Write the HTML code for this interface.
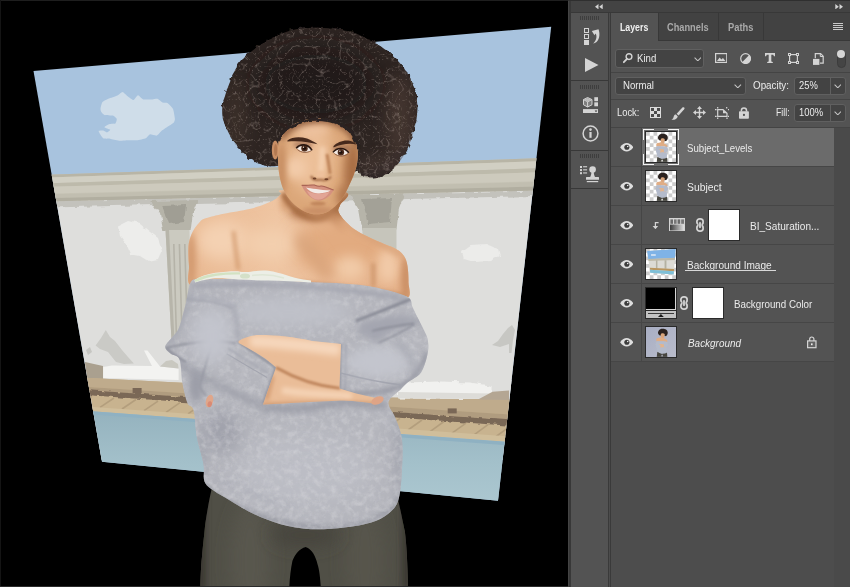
<!DOCTYPE html>
<html><head><meta charset="utf-8"><title>Layers</title><style>
html,body{margin:0;padding:0;}
body{width:850px;height:587px;overflow:hidden;background:#535353;position:relative;font-family:"Liberation Sans",sans-serif;}
.b{position:absolute;display:block;}
.t{position:absolute;white-space:nowrap;transform-origin:0 50%;}
</style></head>
<body>
<div class="b" style="left:0;top:0;width:568px;height:587px;background:#000;overflow:hidden">
<svg class="b" style="left:0;top:0" width="568" height="587" viewBox="0 0 568 587">
<defs>
<clipPath id="q"><polygon points="33.5,71.0 551.2,26.8 498.0,500.8 102.0,461.8"/></clipPath>
<filter id="hairf" x="-10%" y="-10%" width="120%" height="120%">
  <feTurbulence type="fractalNoise" baseFrequency="0.16" numOctaves="2" seed="3" result="n"/>
  <feDisplacementMap in="SourceGraphic" in2="n" scale="7" xChannelSelector="R" yChannelSelector="G"/>
</filter>
<filter id="curl" x="0" y="0" width="100%" height="100%">
  <feTurbulence type="turbulence" baseFrequency="0.085" numOctaves="2" seed="8" result="t"/>
  <feColorMatrix in="t" type="matrix" values="0 0 0 0 0.46  0 0 0 0 0.38  0 0 0 0 0.34  -7 0 0 0 0.95" result="c"/>
  <feComposite in="c" in2="SourceGraphic" operator="in"/>
</filter>
<filter id="curl2" x="0" y="0" width="100%" height="100%">
  <feTurbulence type="turbulence" baseFrequency="0.15" numOctaves="2" seed="31" result="t"/>
  <feColorMatrix in="t" type="matrix" values="0 0 0 0 0.40  0 0 0 0 0.32  0 0 0 0 0.28  -8 0 0 0 0.9" result="c"/>
  <feComposite in="c" in2="SourceGraphic" operator="in"/>
</filter>
<filter id="knit" x="0" y="0" width="100%" height="100%">
  <feTurbulence type="fractalNoise" baseFrequency="0.16" numOctaves="3" seed="5" result="t"/>
  <feColorMatrix in="t" type="matrix" values="0 0 0 0 0.80  0 0 0 0 0.80  0 0 0 0 0.82  1.6 0 0 0 -0.72" result="c"/>
  <feComposite in="c" in2="SourceGraphic" operator="in"/>
</filter>
<filter id="knit2" x="0" y="0" width="100%" height="100%">
  <feTurbulence type="fractalNoise" baseFrequency="0.13" numOctaves="3" seed="21" result="t"/>
  <feColorMatrix in="t" type="matrix" values="0 0 0 0 0.64  0 0 0 0 0.64  0 0 0 0 0.68  0 1.6 0 0 -0.74" result="c"/>
  <feComposite in="c" in2="SourceGraphic" operator="in"/>
</filter>
<filter id="rough" x="-5%" y="-5%" width="110%" height="110%">
  <feTurbulence type="fractalNoise" baseFrequency="0.12" numOctaves="2" seed="11" result="n"/>
  <feDisplacementMap in="SourceGraphic" in2="n" scale="5" xChannelSelector="R" yChannelSelector="G"/>
</filter>
<filter id="b1" filterUnits="userSpaceOnUse" x="0" y="0" width="568" height="587"><feGaussianBlur stdDeviation="1"/></filter>
<filter id="b2" filterUnits="userSpaceOnUse" x="0" y="0" width="568" height="587"><feGaussianBlur stdDeviation="2"/></filter>
<filter id="b3" filterUnits="userSpaceOnUse" x="0" y="0" width="568" height="587"><feGaussianBlur stdDeviation="3"/></filter>
<filter id="b4" filterUnits="userSpaceOnUse" x="0" y="0" width="568" height="587"><feGaussianBlur stdDeviation="4"/></filter>
<filter id="b6" filterUnits="userSpaceOnUse" x="0" y="0" width="568" height="587"><feGaussianBlur stdDeviation="6"/></filter>
<filter id="b8" filterUnits="userSpaceOnUse" x="0" y="0" width="568" height="587"><feGaussianBlur stdDeviation="8"/></filter>
<filter id="b12" filterUnits="userSpaceOnUse" x="0" y="0" width="568" height="587"><feGaussianBlur stdDeviation="12"/></filter>
<linearGradient id="pool" x1="0" y1="0" x2="0" y2="1"><stop offset="0" stop-color="#93b1bd"/><stop offset="0.5" stop-color="#a3c0ca"/><stop offset="1" stop-color="#afcad3"/></linearGradient>
<linearGradient id="corn" x1="0" y1="0" x2="0" y2="1"><stop offset="0" stop-color="#c9c6b6"/><stop offset="0.35" stop-color="#d6d3c6"/><stop offset="0.7" stop-color="#c4c1b1"/><stop offset="1" stop-color="#aaa79a"/></linearGradient>
<linearGradient id="sk" x1="0" y1="0" x2="1" y2="0"><stop offset="0" stop-color="#e9b992"/><stop offset="0.4" stop-color="#efc5a2"/><stop offset="1" stop-color="#e3ae86"/></linearGradient>
<clipPath id="poolc"><polygon points="30,406.8 545,444.6 545,520 30,520"/></clipPath>
<clipPath id="cSw"><path d="M190.8,282.0 C193.4,277.9 193.9,280.0 201.0,279.5 C208.1,279.0 222.8,279.0 233.5,279.0 C244.2,279.0 252.6,279.1 265.3,279.6 C278.0,280.1 296.6,281.4 309.8,282.1 C323.0,282.8 334.1,282.9 344.7,283.7 C355.3,284.5 363.0,284.8 373.3,286.9 C383.6,289.0 400.2,293.0 406.7,296.4 C413.2,299.8 410.7,303.4 412.5,307.0 C414.3,310.6 415.4,313.2 417.7,317.8 C420.0,322.4 424.4,330.4 426.2,334.8 C428.0,339.2 428.0,341.1 428.3,344.0 C428.6,346.9 428.4,349.0 427.9,352.0 C427.4,355.0 426.6,358.6 425.5,362.0 C424.4,365.4 422.9,369.7 421.1,372.4 C419.3,375.1 416.8,376.3 414.5,378.0 C412.2,379.7 409.8,380.7 407.5,382.6 C405.2,384.5 403.6,386.7 400.7,389.4 C397.8,392.1 391.9,396.2 390.0,399.0 C388.1,401.8 388.2,403.0 389.0,406.0 C389.8,409.0 392.6,411.1 394.8,416.8 C397.0,422.5 400.9,430.5 402.0,440.0 C403.1,449.5 402.3,463.9 401.7,474.0 C401.1,484.1 400.4,494.0 398.1,500.7 C395.8,507.4 392.5,510.4 388.0,514.0 C383.5,517.6 378.6,520.2 371.3,522.5 C364.0,524.8 354.5,526.4 344.4,527.5 C334.3,528.6 321.5,529.8 310.9,529.2 C300.3,528.7 290.2,526.7 280.7,524.2 C271.2,521.7 262.3,517.9 253.9,514.0 C245.5,510.1 237.1,504.6 230.4,500.7 C223.7,496.8 217.9,493.8 213.6,490.6 C209.3,487.4 206.2,485.9 204.5,481.5 C202.8,477.1 204.8,471.4 203.5,464.0 C202.2,456.6 198.5,446.0 196.8,437.0 C195.1,428.0 195.1,415.7 193.5,410.0 C191.9,404.3 189.3,407.6 187.4,403.0 C185.5,398.4 183.6,389.9 182.3,382.6 C181.0,375.4 181.5,364.3 179.5,359.5 C177.5,354.7 172.8,355.7 170.4,353.6 C168.0,351.5 165.0,349.4 165.2,346.8 C165.4,344.2 169.2,341.1 171.5,338.0 C173.8,334.9 176.5,333.7 178.9,328.0 C181.3,322.3 183.7,311.7 185.7,304.0 C187.7,296.3 188.2,286.1 190.8,282.0Z"/></clipPath>
<clipPath id="cTo"><path d="M284.0,190.0 C294.7,189.7 335.7,189.5 345.0,192.0 C354.3,194.5 341.1,201.7 340.0,205.0 C338.9,208.3 337.5,209.2 338.5,212.0 C339.5,214.8 342.8,218.8 346.0,222.0 C349.2,225.2 352.4,228.2 357.5,231.3 C362.6,234.4 370.2,237.9 376.5,240.8 C382.8,243.7 390.9,246.3 395.5,248.8 C400.1,251.3 402.0,253.1 404.0,256.0 C406.0,258.9 406.8,261.7 407.5,266.0 C408.2,270.3 408.6,276.7 408.5,282.0 C408.4,287.3 412.6,296.7 406.7,298.0 C400.8,299.3 389.1,292.0 373.0,290.0 C356.9,288.0 333.3,287.3 310.0,286.0 C286.7,284.7 252.7,282.0 233.0,282.0 C213.3,282.0 199.3,288.7 192.0,286.0 C184.7,283.3 189.6,272.5 189.0,266.0 C188.4,259.5 188.2,251.8 188.4,247.0 C188.7,242.2 189.6,239.9 190.5,237.0 C191.4,234.1 192.4,232.0 193.8,229.7 C195.2,227.4 197.1,224.8 199.0,223.0 C200.9,221.2 200.8,220.1 205.0,218.6 C209.2,217.1 216.6,215.4 224.0,213.8 C231.4,212.2 242.6,210.6 249.4,209.0 C256.2,207.4 260.8,205.6 265.0,204.0 C269.2,202.4 272.1,201.2 274.8,199.5 C277.5,197.8 279.5,195.6 281.0,194.0 C282.5,192.4 273.3,190.3 284.0,190.0Z"/></clipPath>
<clipPath id="cHa"><path d="M309.0,28.0 C315.7,27.6 321.7,27.8 329.0,28.5 C336.3,29.2 345.7,30.2 353.0,32.5 C360.3,34.8 367.2,38.8 373.0,42.0 C378.8,45.2 383.0,47.8 388.0,52.0 C393.0,56.2 398.9,61.7 403.0,67.0 C407.1,72.3 410.2,78.2 412.5,84.0 C414.8,89.8 416.3,95.7 417.0,101.5 C417.7,107.3 417.2,113.2 416.5,119.0 C415.8,124.8 414.4,130.2 412.5,136.0 C410.6,141.8 407.8,148.5 405.0,153.5 C402.2,158.5 399.3,162.4 396.0,166.0 C392.7,169.6 388.8,172.9 385.0,175.0 C381.2,177.1 376.8,178.3 373.0,178.5 C369.2,178.7 365.0,177.8 362.0,176.0 C359.0,174.2 357.0,168.7 355.0,168.0 C353.0,167.3 361.5,172.3 350.0,172.0 C338.5,171.7 297.7,167.0 286.0,166.0 C274.3,165.0 283.0,166.0 280.0,166.0 C277.0,166.0 271.8,166.5 268.0,166.0 C264.2,165.5 260.5,164.7 257.0,163.0 C253.5,161.3 250.7,159.2 247.0,156.0 C243.3,152.8 238.2,147.7 235.0,143.5 C231.8,139.3 229.6,135.6 227.5,131.0 C225.4,126.4 223.2,120.9 222.5,116.0 C221.8,111.1 222.2,107.2 223.5,101.5 C224.8,95.8 227.5,88.2 230.0,82.0 C232.5,75.8 234.8,69.7 238.5,64.5 C242.2,59.3 246.9,55.1 252.0,51.0 C257.1,46.9 262.8,43.3 269.0,40.0 C275.2,36.7 282.3,33.0 289.0,31.0 C295.7,29.0 302.3,28.4 309.0,28.0Z"/></clipPath>
<clipPath id="cPa"><path d="M211.9,488 C240,503 280,518 311,522 C345,523 380,514 398.1,500 C401,512 404,528 404.8,531 C406.5,545 407.5,560 408.2,592 L321,592 C320.5,580 319.5,570 317.6,564.4 C315.5,556 312,549 305.9,547 C300,548 295,554 292.4,561 C290.5,570 289.5,580 289.1,592 L200.2,592 C200.5,575 201.5,560 201.9,557.7 C203,545 204.5,532 205.2,524.2 C207,512 209.5,498 211.9,488Z"/></clipPath>
<clipPath id="cAr"><path d="M238.6,341.0 C237.3,338.6 243.9,338.5 247.0,337.5 C250.1,336.5 250.7,335.2 257.0,335.0 C263.3,334.8 275.8,335.0 285.0,336.0 C294.2,337.0 302.7,339.8 312.0,341.0 C321.3,342.2 336.2,335.7 341.0,343.5 C345.8,351.3 337.8,379.6 341.0,388.0 C344.2,396.4 354.5,392.4 360.0,394.0 C365.5,395.6 370.5,396.4 374.0,397.5 C377.5,398.6 380.7,399.4 381.0,400.5 C381.3,401.6 379.5,403.9 376.0,404.0 C372.5,404.1 369.5,401.3 360.0,401.0 C350.5,400.7 335.3,401.4 319.0,402.0 C302.7,402.6 270.5,407.2 262.0,404.5 C253.5,401.8 265.7,392.2 268.0,386.0 C270.3,379.8 278.2,373.2 276.0,367.5 C273.8,361.8 261.2,356.4 255.0,352.0 C248.8,347.6 239.9,343.4 238.6,341.0Z"/></clipPath>
<clipPath id="cFa"><path d="M278.5,141.0 C279.1,136.6 279.4,137.1 281.6,134.5 C283.8,131.9 287.4,127.8 291.8,125.3 C296.2,122.8 302.6,120.2 308.0,119.2 C313.4,118.2 319.0,118.0 324.5,119.2 C330.0,120.4 336.2,123.5 341.0,126.4 C345.8,129.3 350.2,132.5 353.0,136.6 C355.8,140.7 357.3,145.8 357.8,150.9 C358.3,156.0 357.5,161.8 356.2,167.2 C354.9,172.6 352.5,178.1 350.0,183.6 C347.5,189.1 344.6,195.4 341.0,200.0 C337.4,204.6 332.7,208.8 328.6,211.2 C324.5,213.6 320.4,214.3 316.3,214.3 C312.2,214.3 308.1,213.2 304.0,211.2 C299.9,209.1 295.2,205.6 291.8,202.0 C288.4,198.4 285.7,194.1 283.6,189.7 C281.6,185.3 280.4,180.2 279.5,175.4 C278.6,170.6 278.2,166.7 278.0,161.0 C277.8,155.3 277.9,145.4 278.5,141.0Z"/></clipPath>
</defs>
<rect width="568" height="587" fill="#000"/>
<g clip-path="url(#q)">
<rect x="0" y="0" width="568" height="587" fill="#a8c3de"/>
<path d="M100.5,108.5 C100.6,107.5 101.7,103.0 102.5,102.0 C103.3,101.0 106.8,99.5 108.3,98.8 C109.8,98.1 116.0,96.2 117.4,95.5 C118.8,94.8 121.5,91.8 122.5,91.9 C123.5,92.0 126.6,95.4 127.7,96.2 C128.8,97.0 132.5,100.1 133.5,100.0 C134.5,99.9 137.0,95.4 138.0,95.3 C139.0,95.2 141.8,99.0 143.2,99.4 C144.6,99.8 150.9,99.5 152.3,99.4 C153.7,99.3 156.5,98.5 157.5,98.8 C158.5,99.1 161.6,102.1 162.6,102.6 C163.6,103.0 166.8,102.6 167.8,103.3 C168.8,104.0 172.3,107.5 173.0,109.1 C173.7,110.6 174.8,117.4 174.9,118.8 C175.0,120.2 174.3,121.9 173.6,122.7 C172.9,123.5 169.0,125.8 167.8,126.6 C166.6,127.4 162.5,130.2 161.4,131.1 C160.3,132.0 158.0,135.3 156.8,135.6 C155.6,135.9 150.8,134.1 149.7,134.4 C148.6,134.7 147.1,137.6 145.8,138.2 C144.5,138.8 138.7,140.0 136.8,140.2 C134.9,140.4 128.1,140.1 126.4,140.2 C124.7,140.3 121.5,140.9 120.0,140.8 C118.5,140.7 112.6,139.2 110.9,138.9 C109.2,138.6 104.3,139.0 103.1,138.2 C101.9,137.4 98.6,131.9 98.6,131.1 C98.6,130.3 102.3,130.4 103.1,130.5 C103.9,130.6 106.3,132.5 107.0,132.4 C107.7,132.3 110.5,130.3 110.2,129.8 C109.9,129.3 104.5,127.8 104.4,127.2 C104.3,126.6 108.5,124.4 109.6,124.0 C110.7,123.6 114.7,123.9 115.4,123.4 C116.1,122.9 117.0,119.6 116.7,118.8 C116.4,118.0 114.0,116.0 112.8,115.6 C111.6,115.2 105.6,115.3 104.4,114.9 C103.2,114.5 101.6,112.3 101.2,111.7 C100.8,111.1 100.4,109.5 100.5,108.5Z" fill="#cfdde9"/>
<polygon points="30,185 545,175 545,460 30,460" fill="#dededc"/>
<polygon points="30.0,201.8 545.0,190.3 545.0,195.8 30.0,207.9" fill="#c3c2bc" filter="url(#rough)"/>
<path d="M118,226 L128,221 L140,224 L150,232 L158,238 L162,250 L158,259 L148,261 L140,256 L130,254 L126,244 L120,236Z" fill="#ededeb" filter="url(#rough)"/>
<path d="M462,252 L472,245 L486,244 L498,249 L500,256 L490,261 L474,262 L464,259Z" fill="#ececea" filter="url(#rough)"/>
<polygon points="150.5,201 198,200 193,212 190.6,231 163.5,231 160,214" fill="#b6b4a9" filter="url(#rough)"/>
<polygon points="162,206 186,205 184,222 168,224" fill="#a09e94" filter="url(#rough)"/>
<polygon points="165.5,230 189.5,230 192,350 172,350" fill="#cbcac0"/>
<polygon points="165.5,230 169,230 175,350 172,350" fill="#b7b5aa"/>
<polygon points="173,244 174.6,244 177.6,350 176,350" fill="#b5b3a8"/>
<polygon points="178.6,244 180.2,244 183.2,350 181.6,350" fill="#b5b3a8"/>
<polygon points="184,244 185.6,244 188.6,350 187,350" fill="#b5b3a8"/>
<polygon points="349.5,194.5 404.7,193.5 399,208 396.5,229.5 362.4,229.5 359,210" fill="#b6b4a9" filter="url(#rough)"/>
<polygon points="362,199 392,198 390,222 368,224" fill="#a3a197" filter="url(#rough)"/>
<polygon points="362.4,228 396.5,228 396.5,300 362.4,300" fill="#c6c5bb"/>
<polygon points="30.0,175.4 545.0,158.1 545.0,190.3 30.0,201.8" fill="#c6c3b5" />
<polygon points="30.0,175.4 545.0,158.1 545.0,161.1 30.0,178.0" fill="#b8b5a6" />
<polygon points="30.0,178.0 545.0,161.1 545.0,168.1 30.0,183.8" fill="#d1cfc3" />
<polygon points="30.0,183.8 545.0,168.1 545.0,172.1 30.0,187.3" fill="#bdbaab" />
<polygon points="30.0,187.3 545.0,172.1 545.0,181.1 30.0,194.2" fill="#cdcabd" />
<polygon points="30.0,194.9 545.0,181.8 545.0,186.3 30.0,198.5" fill="#c1beb0" />
<polygon points="30.0,198.5 545.0,186.3 545.0,190.3 30.0,201.8" fill="#b1aea0" />
<path d="M95.6,345.6 L101,338 L105.8,330 L110,337 L115,341 L122,350 L128,357 L133.9,363.5 L124,364 L116,362 L108,352 L100,349Z" fill="#cacac6"/>
<path d="M86,350 L90,347 L92,352 L88,355Z" fill="#c6c6c2"/>
<polygon points="85,362 103,366 103,380 86,379" fill="#aaa08f"/>
<path d="M144,350.5 L147.5,350.5 L160,366.5 L178.6,368.5 L178.6,380 L103.2,378 L103.2,367 L112,365.5 L152,366Z" fill="#f3f3f1"/>
<path d="M160,366.5 L166,361 L172,360 L178,364 L178.6,368.5Z" fill="#c9c8c0"/>
<path d="M492,345 L498,341 L503,334 L508,328 L512,325 L515,330 L513,340 L511.5,353 L509,353 L509,344 L500,347Z" fill="#c7c7c3"/>
<polygon points="30.0,375.0 545.0,401.3 545.0,444.6 30.0,406.8" fill="#c8b38f" />
<polygon points="30.0,375.0 545.0,401.3 545.0,416.7 30.0,383.1" fill="#bfab8c" />
<polygon points="180,380 385,397.5 545,400 545,380" fill="#dededc"/>
<polygon points="180,384 385,397.5 545,400 545,404 385,404 180,390" fill="#bfab8c"/>
<polygon points="30.0,383.1 545.0,416.7 545.0,422.8 30.0,386.0" fill="#b09c7f" />
<polygon points="30.0,386.0 545.0,422.8 545.0,428.3 30.0,390.9" fill="#7a6756" filter="url(#rough)"/>
<rect x="132.6" y="388" width="9" height="5" fill="#7a6756"/>
<rect x="447.7" y="408.4" width="9" height="5" fill="#7a6756"/>
<path d="M398,386 L404,382.6 L440,381.6 L470,382.6 L492.5,386 L492.5,399 L398,398.5Z" fill="#f1f1ef" filter="url(#rough)"/>
<path d="M398,392 L492.5,393.5 L492.5,399 L398,398.5Z" fill="#dddcd8"/>
<path d="M492.5,391.8 L509,390.5 L509,400 L478,399.5Z" fill="#b4a693"/>
<path d="M70,394.8 L56,404.2" stroke="#b39e7d" stroke-width="1.6"/>
<path d="M92,396.4 L78,405.8" stroke="#b39e7d" stroke-width="1.6"/>
<path d="M114,398.0 L100,407.4" stroke="#b39e7d" stroke-width="1.6"/>
<path d="M136,399.5 L122,409.0" stroke="#b39e7d" stroke-width="1.6"/>
<path d="M158,401.1 L144,410.7" stroke="#b39e7d" stroke-width="1.6"/>
<path d="M180,402.7 L166,412.3" stroke="#b39e7d" stroke-width="1.6"/>
<path d="M202,404.2 L188,413.9" stroke="#b39e7d" stroke-width="1.6"/>
<path d="M224,405.8 L210,415.5" stroke="#b39e7d" stroke-width="1.6"/>
<path d="M246,407.4 L232,417.1" stroke="#b39e7d" stroke-width="1.6"/>
<path d="M268,409.0 L254,418.7" stroke="#b39e7d" stroke-width="1.6"/>
<path d="M290,410.5 L276,420.3" stroke="#b39e7d" stroke-width="1.6"/>
<path d="M312,412.1 L298,422.0" stroke="#b39e7d" stroke-width="1.6"/>
<path d="M334,413.7 L320,423.6" stroke="#b39e7d" stroke-width="1.6"/>
<path d="M356,415.3 L342,425.2" stroke="#b39e7d" stroke-width="1.6"/>
<path d="M378,416.8 L364,426.8" stroke="#b39e7d" stroke-width="1.6"/>
<path d="M400,418.4 L386,428.4" stroke="#b39e7d" stroke-width="1.6"/>
<path d="M422,420.0 L408,430.0" stroke="#b39e7d" stroke-width="1.6"/>
<path d="M444,421.5 L430,431.6" stroke="#b39e7d" stroke-width="1.6"/>
<path d="M466,423.1 L452,433.2" stroke="#b39e7d" stroke-width="1.6"/>
<path d="M488,424.7 L474,434.9" stroke="#b39e7d" stroke-width="1.6"/>
<path d="M510,426.3 L496,436.5" stroke="#b39e7d" stroke-width="1.6"/>
<path d="M532,427.8 L518,438.1" stroke="#b39e7d" stroke-width="1.6"/>
<polygon points="30.0,402.4 545.0,439.1 545.0,444.6 30.0,406.8" fill="#d0be9b" />
<polygon points="30,406 545,444.6 545,520 30,520" fill="url(#pool)" clip-path="url(#poolc)"/>
<polygon points="30.0,406.8 545.0,444.6 545.0,448.1 30.0,409.8" fill="#8fb1c2" />
</g>
<path d="M211.9,488 C240,503 280,518 311,522 C345,523 380,514 398.1,500 C401,512 404,528 404.8,531 C406.5,545 407.5,560 408.2,592 L321,592 C320.5,580 319.5,570 317.6,564.4 C315.5,556 312,549 305.9,547 C300,548 295,554 292.4,561 C290.5,570 289.5,580 289.1,592 L200.2,592 C200.5,575 201.5,560 201.9,557.7 C203,545 204.5,532 205.2,524.2 C207,512 209.5,498 211.9,488Z" fill="#504f46"/>
<g clip-path="url(#cPa)"><ellipse cx="250" cy="560" rx="20" ry="60" fill="#58574e" filter="url(#b8)"/><ellipse cx="365" cy="560" rx="20" ry="60" fill="#56554c" filter="url(#b8)"/><ellipse cx="305" cy="535" rx="34" ry="12" fill="#46453d" filter="url(#b8)"/><rect x="196" y="480" width="10" height="110" fill="#3a3933" filter="url(#b3)"/><rect x="402" y="480" width="10" height="110" fill="#3a3933" filter="url(#b3)"/></g>
<path d="M284.0,190.0 C294.7,189.7 335.7,189.5 345.0,192.0 C354.3,194.5 341.1,201.7 340.0,205.0 C338.9,208.3 337.5,209.2 338.5,212.0 C339.5,214.8 342.8,218.8 346.0,222.0 C349.2,225.2 352.4,228.2 357.5,231.3 C362.6,234.4 370.2,237.9 376.5,240.8 C382.8,243.7 390.9,246.3 395.5,248.8 C400.1,251.3 402.0,253.1 404.0,256.0 C406.0,258.9 406.8,261.7 407.5,266.0 C408.2,270.3 408.6,276.7 408.5,282.0 C408.4,287.3 412.6,296.7 406.7,298.0 C400.8,299.3 389.1,292.0 373.0,290.0 C356.9,288.0 333.3,287.3 310.0,286.0 C286.7,284.7 252.7,282.0 233.0,282.0 C213.3,282.0 199.3,288.7 192.0,286.0 C184.7,283.3 189.6,272.5 189.0,266.0 C188.4,259.5 188.2,251.8 188.4,247.0 C188.7,242.2 189.6,239.9 190.5,237.0 C191.4,234.1 192.4,232.0 193.8,229.7 C195.2,227.4 197.1,224.8 199.0,223.0 C200.9,221.2 200.8,220.1 205.0,218.6 C209.2,217.1 216.6,215.4 224.0,213.8 C231.4,212.2 242.6,210.6 249.4,209.0 C256.2,207.4 260.8,205.6 265.0,204.0 C269.2,202.4 272.1,201.2 274.8,199.5 C277.5,197.8 279.5,195.6 281.0,194.0 C282.5,192.4 273.3,190.3 284.0,190.0Z" fill="url(#sk)"/>
<g clip-path="url(#cTo)"><ellipse cx="318" cy="212" rx="30" ry="10" fill="#bb8056" filter="url(#b4)"/><ellipse cx="341" cy="207" rx="7" ry="15" fill="#b1764c" filter="url(#b3)"/><ellipse cx="286" cy="203" rx="6" ry="9" fill="#d9a277" filter="url(#b3)"/><path d="M283,193 C289,206 301,217 316,219.5 C331,218 343,207 351,190" stroke="#a66c43" stroke-width="6" fill="none" filter="url(#b2)"/><path d="M330,214 C336,220 340,226 344,236" stroke="#b87d53" stroke-width="8" fill="none" filter="url(#b3)"/><ellipse cx="345" cy="246" rx="56" ry="26" fill="#e2ab80" filter="url(#b8)"/><ellipse cx="222" cy="240" rx="26" ry="20" fill="#f4d1b2" filter="url(#b8)"/><ellipse cx="272" cy="244" rx="28" ry="16" fill="#f3cfae" filter="url(#b8)"/><ellipse cx="388" cy="266" rx="11" ry="18" fill="#f2cba9" filter="url(#b6)"/><ellipse cx="350" cy="268" rx="16" ry="12" fill="#f1caa7" filter="url(#b6)"/><ellipse cx="191" cy="262" rx="5" ry="30" fill="#d39a6f" filter="url(#b3)"/><path d="M233.5,231 C235,245 236.5,258 238.5,270" stroke="#d09669" stroke-width="3" fill="none" filter="url(#b2)"/><path d="M297,238 C310,248 320,262 329,278" stroke="#d9a47c" stroke-width="12" fill="none" filter="url(#b6)"/><path d="M373.3,263 L373.3,287" stroke="#c68c61" stroke-width="3" fill="none" filter="url(#b2)"/><ellipse cx="406" cy="280" rx="5" ry="24" fill="#cb9065" filter="url(#b3)"/><path d="M342,220 C360,234 384,244 403,256" stroke="#d59f76" stroke-width="4" fill="none" filter="url(#b3)"/><path d="M192,284 C240,278 320,281 406,296" stroke="#c98f65" stroke-width="4" fill="none" filter="url(#b2)"/></g>
<path d="M190.8,282.0 C193.4,277.9 193.9,280.0 201.0,279.5 C208.1,279.0 222.8,279.0 233.5,279.0 C244.2,279.0 252.6,279.1 265.3,279.6 C278.0,280.1 296.6,281.4 309.8,282.1 C323.0,282.8 334.1,282.9 344.7,283.7 C355.3,284.5 363.0,284.8 373.3,286.9 C383.6,289.0 400.2,293.0 406.7,296.4 C413.2,299.8 410.7,303.4 412.5,307.0 C414.3,310.6 415.4,313.2 417.7,317.8 C420.0,322.4 424.4,330.4 426.2,334.8 C428.0,339.2 428.0,341.1 428.3,344.0 C428.6,346.9 428.4,349.0 427.9,352.0 C427.4,355.0 426.6,358.6 425.5,362.0 C424.4,365.4 422.9,369.7 421.1,372.4 C419.3,375.1 416.8,376.3 414.5,378.0 C412.2,379.7 409.8,380.7 407.5,382.6 C405.2,384.5 403.6,386.7 400.7,389.4 C397.8,392.1 391.9,396.2 390.0,399.0 C388.1,401.8 388.2,403.0 389.0,406.0 C389.8,409.0 392.6,411.1 394.8,416.8 C397.0,422.5 400.9,430.5 402.0,440.0 C403.1,449.5 402.3,463.9 401.7,474.0 C401.1,484.1 400.4,494.0 398.1,500.7 C395.8,507.4 392.5,510.4 388.0,514.0 C383.5,517.6 378.6,520.2 371.3,522.5 C364.0,524.8 354.5,526.4 344.4,527.5 C334.3,528.6 321.5,529.8 310.9,529.2 C300.3,528.7 290.2,526.7 280.7,524.2 C271.2,521.7 262.3,517.9 253.9,514.0 C245.5,510.1 237.1,504.6 230.4,500.7 C223.7,496.8 217.9,493.8 213.6,490.6 C209.3,487.4 206.2,485.9 204.5,481.5 C202.8,477.1 204.8,471.4 203.5,464.0 C202.2,456.6 198.5,446.0 196.8,437.0 C195.1,428.0 195.1,415.7 193.5,410.0 C191.9,404.3 189.3,407.6 187.4,403.0 C185.5,398.4 183.6,389.9 182.3,382.6 C181.0,375.4 181.5,364.3 179.5,359.5 C177.5,354.7 172.8,355.7 170.4,353.6 C168.0,351.5 165.0,349.4 165.2,346.8 C165.4,344.2 169.2,341.1 171.5,338.0 C173.8,334.9 176.5,333.7 178.9,328.0 C181.3,322.3 183.7,311.7 185.7,304.0 C187.7,296.3 188.2,286.1 190.8,282.0Z" fill="#b4b5bc"/>
<g clip-path="url(#cSw)"><ellipse cx="305" cy="470" rx="70" ry="36" fill="#bcbdc5" filter="url(#b12)"/><ellipse cx="222" cy="432" rx="18" ry="22" fill="#a0a2ac" filter="url(#b8)"/><ellipse cx="399" cy="455" rx="6" ry="50" fill="#a6a8b1" filter="url(#b4)"/><ellipse cx="202" cy="455" rx="5" ry="36" fill="#a6a8b1" filter="url(#b3)"/><path d="M204,486 C240,514 290,528 330,528 C362,527 388,517 400,498" stroke="#9b9da6" stroke-width="5" fill="none" filter="url(#b2)"/><path d="M209,478 C240,486 262,498 290,508" stroke="#adafb8" stroke-width="4" fill="none" filter="url(#b3)"/><rect x="150" y="260" width="300" height="280" fill="#888" filter="url(#knit)" opacity="0.45"/><rect x="150" y="260" width="300" height="280" fill="#888" filter="url(#knit2)" opacity="0.5"/><path d="M192,286 C240,282 320,284 406,299" stroke="#a4a6b0" stroke-width="5" fill="none" filter="url(#b2)"/><ellipse cx="290" cy="312" rx="60" ry="14" fill="#bfc1c9" filter="url(#b8)"/><path d="M262,408 L300,409 L345,402 L386,406" stroke="#9698a3" stroke-width="6" fill="none" filter="url(#b3)"/><path d="M176,362 C200,376 232,392 262,406" stroke="#9c9ea8" stroke-width="6" fill="none" filter="url(#b3)"/><path d="M356,321 C374,314 394,306 411,299" stroke="#8a8c97" stroke-width="3" fill="none" filter="url(#b1)"/><path d="M358,333 C380,326 402,322 422,321" stroke="#a1a3ad" stroke-width="5" fill="none" filter="url(#b3)"/><ellipse cx="386" cy="362" rx="26" ry="14" fill="#c4c6ce" filter="url(#b8)"/><path d="M346,344 L345,390" stroke="#a3a5b0" stroke-width="1.6" filter="url(#b1)"/><path d="M340.5,343.5 L339.5,389" stroke="#8e909b" stroke-width="2" filter="url(#b1)"/><path d="M340,391 C362,397 392,392 408,382 C418,374 424,364 427,352" stroke="#9496a1" stroke-width="4" fill="none" filter="url(#b2)"/><path d="M395,340 C406,350 414,362 416,374" stroke="#a5a7b1" stroke-width="4" fill="none" filter="url(#b3)"/><path d="M358,324 C376,318 396,314 412,316 L414,323 C400,326 384,334 376,344 C370,340 362,332 358,324Z" fill="#a4a6b0" filter="url(#b3)"/><path d="M372,331 C388,327 402,325 414,323.5" stroke="#8b8d98" stroke-width="1.8" fill="none" filter="url(#b1)"/><path d="M378,343 C392,337 404,331 414,324.5" stroke="#8f919c" stroke-width="1.6" fill="none" filter="url(#b1)"/><path d="M340.7,373 C360,378 384,383 401.6,385" stroke="#a2a4ae" stroke-width="1.3" fill="none"/><ellipse cx="372" cy="362" rx="26" ry="12" fill="#c3c5cd" filter="url(#b6)"/><path d="M165.7,347.8 C186,344 212,338 236,343.5" stroke="#8b8d98" stroke-width="2" fill="none" filter="url(#b1)"/><path d="M213.4,340 C208,358 202,376 199.1,387.1 L206,396" stroke="#8f919c" stroke-width="1.8" fill="none" filter="url(#b1)"/><path d="M226.6,353.7 L267,377.6" stroke="#a3a5af" stroke-width="1.2" fill="none"/><ellipse cx="196" cy="386" rx="7" ry="16" fill="#9c9ea8" filter="url(#b3)"/><path d="M184.8,299 C196,300 214,300 232,308" stroke="#a0a2ac" stroke-width="2" fill="none" filter="url(#b1)"/><path d="M190,292 C187,312 178,330 167,346" stroke="#a3a5af" stroke-width="5" fill="none" filter="url(#b3)"/><ellipse cx="212" cy="336" rx="20" ry="28" fill="#c3c5cd" filter="url(#b8)"/><path d="M233,306 C236,318 238,330 238.6,341" stroke="#a4a6b0" stroke-width="3" fill="none" filter="url(#b2)"/><path d="M238.6,342 L276,367.5 L263,404" stroke="#8f919c" stroke-width="2.4" fill="none" filter="url(#b1)"/><path d="M228,348.5 L267.6,373" stroke="#a6a8b2" stroke-width="1.6" fill="none" filter="url(#b1)"/><path d="M189,299 C204,296 222,300 237,307.5" stroke="#aaacb6" stroke-width="3" fill="none" filter="url(#b2)"/><path d="M166,348 C172,354 178,358 186,362" stroke="#8f919c" stroke-width="2.5" fill="none" filter="url(#b1)"/></g>
<path d="M194.5,280 C200,276.5 207,274 215.3,272.8 C224,271.6 232,271 238,271.2 C243,272.4 247,272.2 250.6,271.8 C257,270.6 263,270.2 268.2,270.8 C275,271.8 281,273.4 285.9,275 C292,277 298,278.6 303.5,279.4 L311,280.4 L311,282.4 C296,281.6 282,281 268,280.6 C258,280.2 248,280 238,279.6 C230,278.6 222,278 215,278.2 C208,279 200,280.6 195,282.6Z" fill="#eceee6"/>
<path d="M195,281 C202,277.6 208,275.8 215.3,274.8 C224,273.6 232,273.2 240,273.4" fill="none" stroke="#d3e2c2" stroke-width="2.4"/>
<ellipse cx="245" cy="276" rx="5" ry="2.6" fill="#d4e0c8"/>
<path d="M252,275.5 C262,274 274,275 284,278" fill="none" stroke="#dfe6d6" stroke-width="1.6"/>
<clipPath id="cAr2"><path d="M238.6,341 C245,337 252,335 260,335 C275,335 295,337 312,341 L341,344 L339.5,388.5 C350,392 362,395 374,397.5 L381,400.5 L376,404 C365,402 350,400.5 340,400.5 C320,401.5 290,403 263,404.5 L276,367.5 C266,358 252,350 238.6,343Z"/></clipPath>
<path d="M238.6,341 C245,337 252,335 260,335 C275,335 295,337 312,341 L341,344 L339.5,388.5 C350,392 362,395 374,397.5 L381,400.5 L376,404 C365,402 350,400.5 340,400.5 C320,401.5 290,403 263,404.5 L276,367.5 C266,358 252,350 238.6,343Z" fill="#eabd98"/>
<g clip-path="url(#cAr2)"><path d="M250,341 C275,342 310,346 340,350" stroke="#f6d7bc" stroke-width="12" fill="none" filter="url(#b3)"/><path d="M276,367.5 C296,379 318,386 340,388.6" stroke="#bd835a" stroke-width="3" fill="none" filter="url(#b1)"/><path d="M282,390 C300,394 330,394 352,396" stroke="#f4d2b4" stroke-width="7" fill="none" filter="url(#b2)"/><path d="M262,405 C296,404.5 340,402 378,405" stroke="#cb9269" stroke-width="4" fill="none" filter="url(#b2)"/><path d="M272,376 L266,400" stroke="#d39b72" stroke-width="5" fill="none" filter="url(#b2)"/></g>
<ellipse cx="209.5" cy="401" rx="3.6" ry="6.5" fill="#e0a68a" transform="rotate(14 209.5 401)"/>
<ellipse cx="210.5" cy="404" rx="2.2" ry="3" fill="#d98a74" transform="rotate(14 209.5 401)"/>
<ellipse cx="377.5" cy="400.5" rx="6.5" ry="3.8" fill="#dfa486" transform="rotate(-22 377.5 400.5)"/>
<path d="M309.0,28.0 C315.7,27.6 321.7,27.8 329.0,28.5 C336.3,29.2 345.7,30.2 353.0,32.5 C360.3,34.8 367.2,38.8 373.0,42.0 C378.8,45.2 383.0,47.8 388.0,52.0 C393.0,56.2 398.9,61.7 403.0,67.0 C407.1,72.3 410.2,78.2 412.5,84.0 C414.8,89.8 416.3,95.7 417.0,101.5 C417.7,107.3 417.2,113.2 416.5,119.0 C415.8,124.8 414.4,130.2 412.5,136.0 C410.6,141.8 407.8,148.5 405.0,153.5 C402.2,158.5 399.3,162.4 396.0,166.0 C392.7,169.6 388.8,172.9 385.0,175.0 C381.2,177.1 376.8,178.3 373.0,178.5 C369.2,178.7 365.0,177.8 362.0,176.0 C359.0,174.2 357.0,168.7 355.0,168.0 C353.0,167.3 361.5,172.3 350.0,172.0 C338.5,171.7 297.7,167.0 286.0,166.0 C274.3,165.0 283.0,166.0 280.0,166.0 C277.0,166.0 271.8,166.5 268.0,166.0 C264.2,165.5 260.5,164.7 257.0,163.0 C253.5,161.3 250.7,159.2 247.0,156.0 C243.3,152.8 238.2,147.7 235.0,143.5 C231.8,139.3 229.6,135.6 227.5,131.0 C225.4,126.4 223.2,120.9 222.5,116.0 C221.8,111.1 222.2,107.2 223.5,101.5 C224.8,95.8 227.5,88.2 230.0,82.0 C232.5,75.8 234.8,69.7 238.5,64.5 C242.2,59.3 246.9,55.1 252.0,51.0 C257.1,46.9 262.8,43.3 269.0,40.0 C275.2,36.7 282.3,33.0 289.0,31.0 C295.7,29.0 302.3,28.4 309.0,28.0Z" fill="#2c2320" filter="url(#hairf)"/>
<g clip-path="url(#cHa)"><ellipse cx="320" cy="100" rx="100" ry="80" fill="#2e2522"/><ellipse cx="316" cy="84" rx="60" ry="38" fill="#1f1816" opacity="0.7" filter="url(#b12)"/><ellipse cx="400" cy="120" rx="14" ry="46" fill="#54433b" opacity="0.55" filter="url(#b8)"/><ellipse cx="236" cy="118" rx="10" ry="38" fill="#4a3a33" opacity="0.5" filter="url(#b8)"/><ellipse cx="380" cy="165" rx="22" ry="10" fill="#4e3e37" opacity="0.5" filter="url(#b6)"/><rect x="215" y="20" width="210" height="165" fill="#000" filter="url(#curl2)" opacity="0.3"/><rect x="215" y="20" width="210" height="165" fill="#000" filter="url(#curl)" opacity="0.34"/></g>
<ellipse cx="275.2" cy="150" rx="3.4" ry="9.5" fill="#c98f65"/>
<ellipse cx="275.6" cy="150" rx="1.6" ry="6" fill="#b37a52"/>
<path d="M278.5,141.0 C279.1,136.6 279.4,137.1 281.6,134.5 C283.8,131.9 287.4,127.8 291.8,125.3 C296.2,122.8 302.6,120.2 308.0,119.2 C313.4,118.2 319.0,118.0 324.5,119.2 C330.0,120.4 336.2,123.5 341.0,126.4 C345.8,129.3 350.2,132.5 353.0,136.6 C355.8,140.7 357.3,145.8 357.8,150.9 C358.3,156.0 357.5,161.8 356.2,167.2 C354.9,172.6 352.5,178.1 350.0,183.6 C347.5,189.1 344.6,195.4 341.0,200.0 C337.4,204.6 332.7,208.8 328.6,211.2 C324.5,213.6 320.4,214.3 316.3,214.3 C312.2,214.3 308.1,213.2 304.0,211.2 C299.9,209.1 295.2,205.6 291.8,202.0 C288.4,198.4 285.7,194.1 283.6,189.7 C281.6,185.3 280.4,180.2 279.5,175.4 C278.6,170.6 278.2,166.7 278.0,161.0 C277.8,155.3 277.9,145.4 278.5,141.0Z" fill="#dba678"/>
<g clip-path="url(#cFa)"><ellipse cx="312" cy="160" rx="22" ry="34" fill="#ecbf98" filter="url(#b8)"/><ellipse cx="296" cy="168" rx="11" ry="11" fill="#f2cba9" filter="url(#b4)"/><ellipse cx="312" cy="130" rx="18" ry="6" fill="#eec3a0" filter="url(#b4)"/><ellipse cx="281.5" cy="170" rx="4" ry="28" fill="#c48a5f" filter="url(#b3)"/><ellipse cx="353" cy="176" rx="9" ry="34" fill="#a96e45" filter="url(#b4)"/><ellipse cx="345" cy="197" rx="8" ry="12" fill="#b1774d" filter="url(#b4)"/><path d="M280,138 C290,124 308,118 324,119 C342,121 354,132 359,146" stroke="#8a583b" stroke-width="7" fill="none" filter="url(#b3)"/><ellipse cx="318" cy="211" rx="16" ry="4" fill="#c98f66" filter="url(#b2)"/><ellipse cx="303" cy="144.6" rx="10" ry="4" fill="#b38263" filter="url(#b2)"/><ellipse cx="342" cy="148.5" rx="9.5" ry="4" fill="#a97858" filter="url(#b2)"/><path d="M287.4,140.4 C292,136.8 300,136.2 307,138.6 C311,140.2 314.6,142.2 317.6,144.2 C310,142.4 300,140.4 287.4,141.6Z" fill="#46291c"/><path d="M333.4,146.2 C337,142.4 343,140 348.4,140.6 C352,141.2 354.6,142.6 356.6,144.4 C350,143 342,143.6 333.6,147.4Z" fill="#46291c"/><path d="M296.6,148 C300,144.2 308,143.8 311.6,150.2 C307,153 300.6,152.2 296.6,148Z" fill="#f3e9e2"/><circle cx="304.5" cy="148.3" r="3.2" fill="#4b2a1b"/><circle cx="304.5" cy="148.3" r="1.5" fill="#1d0f0a"/><circle cx="303.5" cy="147.3" r="0.7" fill="#e8d8cc"/><path d="M296.2,148.2 C300,143.6 308,143.2 312,150.4" stroke="#2a1710" stroke-width="1.6" fill="none"/><path d="M297.5,149.6 C301,152.8 307,153.4 311.4,150.6" stroke="#8a5a40" stroke-width="0.9" fill="none"/><path d="M333.4,152.2 C336.6,147.8 344.6,147.6 348.4,152.6 C344.6,156.6 337.6,156.4 333.4,152.2Z" fill="#f3e9e2"/><circle cx="340.9" cy="152.2" r="3.2" fill="#4b2a1b"/><circle cx="340.9" cy="152.2" r="1.5" fill="#1d0f0a"/><circle cx="339.9" cy="151.2" r="0.7" fill="#e8d8cc"/><path d="M333,152.4 C336.6,147.2 344.8,147 348.8,152.8" stroke="#2a1710" stroke-width="1.6" fill="none"/><path d="M334.4,153.6 C338,156.8 344,156.8 347.8,154" stroke="#8a5a40" stroke-width="0.9" fill="none"/><path d="M322.5,147 C322,156 321.6,164 321,172" stroke="#f5d2b2" stroke-width="5" fill="none" filter="url(#b2)"/><path d="M327,154 C328.4,162 329.6,168 330,174" stroke="#bd8359" stroke-width="3" fill="none" filter="url(#b1)"/><ellipse cx="320.6" cy="174.6" rx="4.2" ry="3.4" fill="#eec19c" filter="url(#b1)"/><path d="M311,176 C312.6,179.6 316.4,180.6 320.4,179.6 C324.6,181 329,180 331,176.6" stroke="#9c6440" stroke-width="2" fill="none" filter="url(#b1)"/><ellipse cx="314.6" cy="178.4" rx="1.8" ry="1" fill="#6e4028"/><ellipse cx="326.4" cy="179.2" rx="2" ry="1" fill="#6e4028"/><path d="M301.6,185.2 C305,185.8 310,184.4 314.3,184.8 C316.4,185.6 318,186.2 319.6,186 C321.6,185.6 323.4,186 325,186.6 C328,187.6 331,188.8 333.7,189.7 C331.6,194.4 327,199.4 320,200.4 C312,200.6 305,193.6 301.6,185.2Z" fill="#d4917f"/><path d="M306,187.4 C311,188.4 320,189.6 330.6,190.6 C327,193 321,193.8 316,193.2 C312,192.6 308.4,190.4 306,187.4Z" fill="#f3ebe6"/><path d="M307,190.8 C312,194 320,195 329.6,192 C326,198 321,200.2 316.6,199.6 C312.6,199 309,195.4 307,190.8Z" fill="#e2a595"/><path d="M301.6,185.2 C305,186 310,184.6 314.3,185 C316.4,185.8 318,186.4 319.6,186.2 C321.6,185.8 323.4,186.2 325,186.8 C328,187.8 331,189 333.7,189.9" stroke="#a86454" stroke-width="1.1" fill="none"/><ellipse cx="318" cy="203.6" rx="8" ry="2" fill="#c0855b" filter="url(#b1)"/></g>
<path d="M278,142 C282,131 292,123.5 308,119.5 C322,118 338,121 348,129 C354,134 357.5,141 358.6,149" stroke="#2c2320" stroke-width="3.2" fill="none" filter="url(#rough)"/>
<rect x="0" y="0" width="568" height="1" fill="#1e1e1e"/><rect x="0" y="0" width="1" height="587" fill="#141414"/><rect x="0" y="586" width="568" height="1" fill="#2b2b2b"/>
</svg>
</div>
<div class="b" style="left:568px;top:0px;width:282px;height:587px;background:#535353;"></div>
<div class="b" style="left:568px;top:0px;width:3px;height:587px;background:#383838;"></div>
<div class="b" style="left:568px;top:0px;width:1px;height:587px;background:#444444;"></div>
<div class="b" style="left:571px;top:0px;width:279px;height:13px;background:#434343;"></div>
<div class="b" style="left:568px;top:0px;width:282px;height:1px;background:#2f2f2f;"></div>
<div class="b" style="left:571px;top:12px;width:279px;height:1px;background:#383838;"></div>
<svg class="b" style="left:594.6px;top:3.8px" width="8" height="5.4" viewBox="0 0 8 5.4"><path d="M3.5,0 L3.5,5.4 L0,2.7Z M7.7,0 L7.7,5.4 L4.2,2.7Z" fill="#d4d4d4"/></svg>
<svg class="b" style="left:835.4px;top:3.8px" width="8" height="5.4" viewBox="0 0 8 5.4"><path d="M0.3,0 L0.3,5.4 L3.8,2.7Z M4.5,0 L4.5,5.4 L8,2.7Z" fill="#d4d4d4"/></svg>
<div class="b" style="left:608px;top:13px;width:3px;height:574px;background:#3a3a3a;"></div>
<div class="b" style="left:609.2px;top:13px;width:1px;height:574px;background:#4c4c4c;"></div>
<div class="b" style="left:580px;top:16px;width:1px;height:4px;background:#3e3e3e;"></div><div class="b" style="left:582px;top:16px;width:1px;height:4px;background:#3e3e3e;"></div><div class="b" style="left:584px;top:16px;width:1px;height:4px;background:#3e3e3e;"></div><div class="b" style="left:586px;top:16px;width:1px;height:4px;background:#3e3e3e;"></div><div class="b" style="left:588px;top:16px;width:1px;height:4px;background:#3e3e3e;"></div><div class="b" style="left:590px;top:16px;width:1px;height:4px;background:#3e3e3e;"></div><div class="b" style="left:592px;top:16px;width:1px;height:4px;background:#3e3e3e;"></div><div class="b" style="left:594px;top:16px;width:1px;height:4px;background:#3e3e3e;"></div><div class="b" style="left:596px;top:16px;width:1px;height:4px;background:#3e3e3e;"></div><div class="b" style="left:598px;top:16px;width:1px;height:4px;background:#3e3e3e;"></div>
<svg class="b" style="left:584px;top:28px" width="16" height="17" viewBox="0 0 16 17"><rect x="0.5" y="0.5" width="4" height="4" fill="none" stroke="#d4d4d4"/><rect x="0.5" y="6.5" width="4" height="4" fill="none" stroke="#d4d4d4"/><rect x="0" y="12" width="5" height="5" fill="#d4d4d4"/><path d="M7.8,2.9 L14.5,1.2 C15.9,5 15.9,10 13,13.6 C12,14.7 10.6,15.3 9.2,15.6 C10.8,13.8 12.1,12 12.4,9.6 C12.6,8 12.2,6.6 11.6,5.6 L10.5,7.2Z" fill="#d4d4d4"/><path d="M0,0" fill="#d4d4d4"/></svg>
<svg class="b" style="left:585px;top:58px" width="13.5" height="14" viewBox="0 0 13.5 14"><path d="M0,0 L13.5,7 L0,14Z" fill="#d4d4d4"/></svg>
<div class="b" style="left:571px;top:80px;width:37px;height:1px;background:#383838;"></div>
<div class="b" style="left:580px;top:85px;width:1px;height:4px;background:#3e3e3e;"></div><div class="b" style="left:582px;top:85px;width:1px;height:4px;background:#3e3e3e;"></div><div class="b" style="left:584px;top:85px;width:1px;height:4px;background:#3e3e3e;"></div><div class="b" style="left:586px;top:85px;width:1px;height:4px;background:#3e3e3e;"></div><div class="b" style="left:588px;top:85px;width:1px;height:4px;background:#3e3e3e;"></div><div class="b" style="left:590px;top:85px;width:1px;height:4px;background:#3e3e3e;"></div><div class="b" style="left:592px;top:85px;width:1px;height:4px;background:#3e3e3e;"></div><div class="b" style="left:594px;top:85px;width:1px;height:4px;background:#3e3e3e;"></div><div class="b" style="left:596px;top:85px;width:1px;height:4px;background:#3e3e3e;"></div><div class="b" style="left:598px;top:85px;width:1px;height:4px;background:#3e3e3e;"></div>
<svg class="b" style="left:582.6px;top:96.7px" width="15.6" height="16.4" viewBox="0 0 15.6 16.4"><path d="M4.6,0.5 L9,2.6 L9,7.8 L4.6,10 L0.5,7.8 L0.5,2.6Z" fill="#7d7d7d" stroke="#d4d4d4" stroke-width="1"/><path d="M0.5,2.6 L4.6,4.8 L9,2.6 M4.6,4.8 L4.6,10" fill="none" stroke="#d4d4d4" stroke-width="1"/><path d="M4.6,0.9 L8.2,2.6 L4.6,4.4 L1.2,2.6Z" fill="#bdbdbd"/><rect x="11.3" y="0.2" width="4.3" height="4" fill="#d4d4d4"/><rect x="11.3" y="5.3" width="4.3" height="4" fill="#d4d4d4"/><rect x="0" y="12.1" width="15.6" height="4.2" fill="#d4d4d4"/><path d="M11.7,13.4 L14.3,13.4 L13,15.3Z" fill="#3a3a3a"/></svg>
<svg class="b" style="left:581.5px;top:124.7px" width="17" height="17" viewBox="0 0 17 17"><circle cx="8.5" cy="8.5" r="7.4" fill="none" stroke="#d4d4d4" stroke-width="1.5"/><rect x="7.4" y="7" width="2.2" height="5.8" fill="#d4d4d4"/><circle cx="8.5" cy="4.6" r="1.3" fill="#d4d4d4"/></svg>
<div class="b" style="left:571px;top:150px;width:37px;height:1px;background:#383838;"></div>
<div class="b" style="left:580px;top:154px;width:1px;height:4px;background:#3e3e3e;"></div><div class="b" style="left:582px;top:154px;width:1px;height:4px;background:#3e3e3e;"></div><div class="b" style="left:584px;top:154px;width:1px;height:4px;background:#3e3e3e;"></div><div class="b" style="left:586px;top:154px;width:1px;height:4px;background:#3e3e3e;"></div><div class="b" style="left:588px;top:154px;width:1px;height:4px;background:#3e3e3e;"></div><div class="b" style="left:590px;top:154px;width:1px;height:4px;background:#3e3e3e;"></div><div class="b" style="left:592px;top:154px;width:1px;height:4px;background:#3e3e3e;"></div><div class="b" style="left:594px;top:154px;width:1px;height:4px;background:#3e3e3e;"></div><div class="b" style="left:596px;top:154px;width:1px;height:4px;background:#3e3e3e;"></div><div class="b" style="left:598px;top:154px;width:1px;height:4px;background:#3e3e3e;"></div>
<svg class="b" style="left:580px;top:165px" width="20" height="18" viewBox="0 0 20 18"><rect x="0" y="1" width="2" height="2" fill="#d4d4d4"/><rect x="3.1" y="1.2" width="4" height="1.1" fill="#d4d4d4"/><rect x="0" y="4.1" width="2" height="2" fill="#d4d4d4"/><rect x="3.1" y="4.3" width="4" height="1.1" fill="#d4d4d4"/><rect x="0" y="7.2" width="2" height="2" fill="#d4d4d4"/><rect x="3.1" y="7.4" width="4" height="1.1" fill="#d4d4d4"/><circle cx="12.6" cy="4.5" r="3.3" fill="#d4d4d4"/><path d="M11.4,6.6 L13.8,6.6 C13.8,9 14.2,10.6 15,12 L18.4,12 Q19,12 19,12.6 L19,14.8 L6,14.8 L6,12.6 Q6,12 6.6,12 L10.2,12 C11,10.6 11.4,9 11.4,6.6Z" fill="#d4d4d4"/><rect x="6.8" y="16" width="11.4" height="1.2" fill="#d4d4d4"/></svg>
<div class="b" style="left:571px;top:188px;width:37px;height:1px;background:#383838;"></div>
<div class="b" style="left:611px;top:13px;width:239px;height:28px;background:#424242;"></div>
<div class="b" style="left:611px;top:13px;width:47px;height:28px;background:#535353;"></div>
<div class="b" style="left:658px;top:13px;width:1px;height:28px;background:#383838;"></div>
<div class="b" style="left:718px;top:13px;width:1px;height:28px;background:#383838;"></div>
<div class="b" style="left:763px;top:13px;width:1px;height:28px;background:#383838;"></div>
<div class="b" style="left:659px;top:40px;width:191px;height:1px;background:#383838;"></div>
<div class="t" style="left:620.30px;top:19.86px;font-size:10.5px;line-height:15px;font-weight:bold;font-style:normal;color:#f0f0f0;transform:scaleX(0.8358);">Layers</div>
<div class="t" style="left:666.80px;top:19.86px;font-size:10.5px;line-height:15px;font-weight:bold;font-style:normal;color:#a9a9a9;transform:scaleX(0.8802);">Channels</div>
<div class="t" style="left:728.20px;top:19.86px;font-size:10.5px;line-height:15px;font-weight:bold;font-style:normal;color:#a9a9a9;transform:scaleX(0.8883);">Paths</div>
<div class="b" style="left:832.6px;top:23px;width:10.6px;height:1px;background:#c9c9c9;"></div>
<div class="b" style="left:832.6px;top:25px;width:10.6px;height:1px;background:#c9c9c9;"></div>
<div class="b" style="left:832.6px;top:27px;width:10.6px;height:1px;background:#c9c9c9;"></div>
<div class="b" style="left:832.6px;top:29px;width:10.6px;height:1px;background:#c9c9c9;"></div>
<div class="b" style="left:614.8px;top:49.4px;width:89.7px;height:18.2px;background:#434343;border:1px solid #606060;border-radius:3px;box-sizing:border-box;"></div>
<svg class="b" style="left:622.6px;top:53.4px" width="10" height="10.4" viewBox="0 0 10 10.4"><circle cx="6" cy="3.6" r="2.9" fill="none" stroke="#d4d4d4" stroke-width="1.4"/><path d="M4,5.8 L0.8,9.2" stroke="#d4d4d4" stroke-width="1.8" stroke-linecap="round"/></svg>
<div class="t" style="left:637.00px;top:50.56px;font-size:10.5px;line-height:15px;font-weight:normal;font-style:normal;color:#ebebeb;transform:scaleX(0.9184);">Kind</div>
<svg class="b" style="left:693.6px;top:56.6px" width="7.6" height="4.6" viewBox="0 0 7.6 4.6"><path d="M0.6,0.6 L3.8,3.8 L7,0.6" fill="none" stroke="#c6c6c6" stroke-width="1.05"/></svg>
<svg class="b" style="left:714.6px;top:53px" width="12.4" height="10" viewBox="0 0 12.4 10"><rect x="0.6" y="0.6" width="11.2" height="8.8" fill="none" stroke="#d4d4d4" stroke-width="1.2"/><path d="M2,8 L4.6,4.4 L6.4,6.6 L8,5 L10.4,8Z" fill="#d4d4d4"/></svg>
<svg class="b" style="left:739.9px;top:52.6px" width="11.2" height="11.2" viewBox="0 0 11.2 11.2"><circle cx="5.6" cy="5.6" r="4.9" fill="none" stroke="#d4d4d4" stroke-width="1.2"/><path d="M9.2,2.1 A4.9,4.9 0 0 1 2.1,9.2Z" fill="#d4d4d4"/></svg>
<svg class="b" style="left:765px;top:53.2px" width="10" height="10" viewBox="0 0 10 10"><path d="M0,0 L10,0 L10,3.2 L9,3.2 L8.2,1.8 L6.3,1.8 L6.3,8.4 L7.8,8.9 L7.8,10 L2.2,10 L2.2,8.9 L3.7,8.4 L3.7,1.8 L1.8,1.8 L1,3.2 L0,3.2Z" fill="#d4d4d4"/></svg>
<svg class="b" style="left:788px;top:52.7px" width="11" height="11" viewBox="0 0 11 11"><rect x="1.6" y="1.6" width="7.8" height="7.8" fill="none" stroke="#d4d4d4" stroke-width="1.2"/><rect x="0" y="0" width="3" height="3" fill="#d4d4d4"/><rect x="8" y="0" width="3" height="3" fill="#d4d4d4"/><rect x="0" y="8" width="3" height="3" fill="#d4d4d4"/><rect x="8" y="8" width="3" height="3" fill="#d4d4d4"/><rect x="1" y="1" width="1" height="1" fill="#535353"/><rect x="9" y="1" width="1" height="1" fill="#535353"/><rect x="1" y="9" width="1" height="1" fill="#535353"/><rect x="9" y="9" width="1" height="1" fill="#535353"/></svg>
<svg class="b" style="left:812.7px;top:52.6px" width="11" height="12" viewBox="0 0 11 12"><path d="M2.3,0.6 L7.6,0.6 L10.2,3.2 L10.2,10.2 L2.3,10.2Z" fill="none" stroke="#d4d4d4" stroke-width="1.2"/><path d="M7.3,0.6 L7.3,3.5 L10.2,3.5" fill="none" stroke="#d4d4d4" stroke-width="1"/><rect x="-0.6" y="5.2" width="7.6" height="7.2" fill="#535353"/><rect x="0" y="5.9" width="6.4" height="6" fill="#d4d4d4"/></svg>
<div class="b" style="left:837.4px;top:51.4px;width:8.8px;height:16.2px;background:#454545;border-radius:4.4px;border:1px solid #3c3c3c;box-sizing:border-box;"></div>
<div class="b" style="left:837.3px;top:50.1px;width:8.2px;height:8.2px;background:#d6d6d6;border-radius:50%;"></div>
<div class="b" style="left:611px;top:72px;width:239px;height:1px;background:#444444;"></div>
<div class="b" style="left:614.5px;top:76.6px;width:131px;height:18px;background:#434343;border:1px solid #606060;border-radius:3px;box-sizing:border-box;"></div>
<div class="t" style="left:623.00px;top:77.66px;font-size:10.5px;line-height:15px;font-weight:normal;font-style:normal;color:#ebebeb;transform:scaleX(0.9161);">Normal</div>
<svg class="b" style="left:734.2px;top:83.8px" width="7.6" height="4.6" viewBox="0 0 7.6 4.6"><path d="M0.6,0.6 L3.8,3.8 L7,0.6" fill="none" stroke="#c6c6c6" stroke-width="1.05"/></svg>
<div class="t" style="left:753.00px;top:77.66px;font-size:10.5px;line-height:15px;font-weight:normal;font-style:normal;color:#ebebeb;transform:scaleX(0.9347);">Opacity:</div>
<div class="b" style="left:793.5px;top:76.6px;width:52px;height:18px;background:#434343;border:1px solid #606060;border-radius:3px;box-sizing:border-box;"></div>
<div class="b" style="left:829.5px;top:77.6px;width:1px;height:16px;background:#606060;"></div>
<div class="t" style="left:798.50px;top:77.66px;font-size:10.5px;line-height:15px;font-weight:normal;font-style:normal;color:#ebebeb;transform:scaleX(0.8946);">25%</div>
<svg class="b" style="left:833.8px;top:83.8px" width="7.6" height="4.6" viewBox="0 0 7.6 4.6"><path d="M0.6,0.6 L3.8,3.8 L7,0.6" fill="none" stroke="#c6c6c6" stroke-width="1.05"/></svg>
<div class="b" style="left:611px;top:99px;width:239px;height:1px;background:#444444;"></div>
<div class="t" style="left:617.40px;top:104.86px;font-size:10.5px;line-height:15px;font-weight:normal;font-style:normal;color:#ebebeb;transform:scaleX(0.8926);">Lock:</div>
<svg class="b" style="left:650px;top:107px" width="11" height="11" viewBox="0 0 11 11"><rect x="0" y="0" width="11" height="11" fill="#dadada"/><rect x="1" y="1" width="3" height="3" fill="#4a4a4a"/><rect x="7" y="1" width="3" height="3" fill="#4a4a4a"/><rect x="4" y="4" width="3" height="3" fill="#4a4a4a"/><rect x="1" y="7" width="3" height="3" fill="#4a4a4a"/><rect x="7" y="7" width="3" height="3" fill="#4a4a4a"/></svg>
<svg class="b" style="left:671px;top:106.7px" width="14" height="13.2" viewBox="0 0 14 13.2"><path d="M12.6,0.2 C13.6,0.6 13.8,1.4 13.2,2.2 L7.6,8.6 L5.6,6.8 L11.4,0.6 C11.8,0.2 12.2,0.1 12.6,0.2Z" fill="#d4d4d4"/><path d="M5,7.6 L6.8,9.4 C6.4,11.6 3.6,13.2 0.4,12.8 C2.2,11.6 2.4,10.6 2.8,9.2 C3.2,8 4,7.4 5,7.6Z" fill="#d4d4d4"/></svg>
<svg class="b" style="left:693px;top:106px" width="13" height="13" viewBox="0 0 13 13"><path d="M6.5,0 L9,3 L7.2,3 L7.2,5.8 L10,5.8 L10,4 L13,6.5 L10,9 L10,7.2 L7.2,7.2 L7.2,10 L9,10 L6.5,13 L4,10 L5.8,10 L5.8,7.2 L3,7.2 L3,9 L0,6.5 L3,4 L3,5.8 L5.8,5.8 L5.8,3 L4,3Z" fill="#d4d4d4"/></svg>
<svg class="b" style="left:714.8px;top:106.8px" width="14.4" height="12.4" viewBox="0 0 14.4 12.4"><path d="M2.7,2.7 L8,2.7 L12,6.2 L12,9.4 L2.7,9.4Z" fill="none" stroke="#d4d4d4" stroke-width="1.2"/><path d="M8,2.7 L12,6.2 L8,6.2Z" fill="#d4d4d4"/><path d="M2.7,0 V1.6 M0,2.7 H1.6 M11.7,0 V1.4 M13,2.7 H14.4 M2.7,10.6 V12.4 M0,9.4 H1.6 M12,10.6 V12.4 M13,9.4 H14.4" stroke="#d4d4d4" stroke-width="1.2"/></svg>
<svg class="b" style="left:739px;top:107px" width="9.9" height="11.8" viewBox="0 0 9.9 11.8"><path d="M2.4,4.6 V3.5 A2.55,2.55 0 0 1 7.5,3.5 V4.6" fill="none" stroke="#d4d4d4" stroke-width="1.5"/><rect x="0" y="4.2" width="9.9" height="7.6" rx="0.8" fill="#d4d4d4"/><circle cx="4.95" cy="7.9" r="1.05" fill="#4a4a4a"/></svg>
<div class="t" style="left:775.50px;top:104.86px;font-size:10.5px;line-height:15px;font-weight:normal;font-style:normal;color:#ebebeb;transform:scaleX(0.8329);">Fill:</div>
<div class="b" style="left:793.5px;top:103.8px;width:52px;height:17.8px;background:#434343;border:1px solid #606060;border-radius:3px;box-sizing:border-box;"></div>
<div class="b" style="left:829.5px;top:104.8px;width:1px;height:15.8px;background:#606060;"></div>
<div class="t" style="left:798.50px;top:104.86px;font-size:10.5px;line-height:15px;font-weight:normal;font-style:normal;color:#ebebeb;transform:scaleX(0.8974);">100%</div>
<svg class="b" style="left:833.8px;top:110.8px" width="7.6" height="4.6" viewBox="0 0 7.6 4.6"><path d="M0.6,0.6 L3.8,3.8 L7,0.6" fill="none" stroke="#c6c6c6" stroke-width="1.05"/></svg>
<div class="b" style="left:611px;top:127px;width:239px;height:1px;background:#444444;"></div>
<div class="b" style="left:611px;top:128px;width:223px;height:459px;background:#4d4d4d;"></div>
<div class="b" style="left:834px;top:128px;width:16px;height:459px;background:#4a4a4a;"></div>
<div class="b" style="left:611px;top:128px;width:223px;height:38px;background:#535353;"></div>
<div class="b" style="left:642px;top:128px;width:192px;height:38px;background:#6b6b6b;"></div>
<div class="b" style="left:611px;top:166px;width:223px;height:1px;background:#464646;"></div>
<div class="b" style="left:641px;top:128px;width:1px;height:38px;background:#464646;"></div>
<svg class="b" style="left:619.8px;top:143.1px" width="13.5" height="8.6" viewBox="0 0 13.5 8.6"><path d="M0.1,4.3 C2.2,1.4 4.4,0.1 6.75,0.1 C9.1,0.1 11.3,1.4 13.4,4.3 C11.3,7.2 9.1,8.5 6.75,8.5 C4.4,8.5 2.2,7.2 0.1,4.3Z" fill="#dedede"/><circle cx="6.85" cy="4.3" r="2.55" fill="#3d3d3d"/><circle cx="7.7" cy="3.4" r="0.75" fill="#f0f0f0"/></svg>
<div class="b" style="left:611px;top:167px;width:223px;height:38px;background:#535353;"></div>
<div class="b" style="left:611px;top:205px;width:223px;height:1px;background:#464646;"></div>
<div class="b" style="left:641px;top:167px;width:1px;height:38px;background:#464646;"></div>
<svg class="b" style="left:619.8px;top:182.1px" width="13.5" height="8.6" viewBox="0 0 13.5 8.6"><path d="M0.1,4.3 C2.2,1.4 4.4,0.1 6.75,0.1 C9.1,0.1 11.3,1.4 13.4,4.3 C11.3,7.2 9.1,8.5 6.75,8.5 C4.4,8.5 2.2,7.2 0.1,4.3Z" fill="#dedede"/><circle cx="6.85" cy="4.3" r="2.55" fill="#3d3d3d"/><circle cx="7.7" cy="3.4" r="0.75" fill="#f0f0f0"/></svg>
<div class="b" style="left:611px;top:206px;width:223px;height:38px;background:#535353;"></div>
<div class="b" style="left:611px;top:244px;width:223px;height:1px;background:#464646;"></div>
<div class="b" style="left:641px;top:206px;width:1px;height:38px;background:#464646;"></div>
<svg class="b" style="left:619.8px;top:221.1px" width="13.5" height="8.6" viewBox="0 0 13.5 8.6"><path d="M0.1,4.3 C2.2,1.4 4.4,0.1 6.75,0.1 C9.1,0.1 11.3,1.4 13.4,4.3 C11.3,7.2 9.1,8.5 6.75,8.5 C4.4,8.5 2.2,7.2 0.1,4.3Z" fill="#dedede"/><circle cx="6.85" cy="4.3" r="2.55" fill="#3d3d3d"/><circle cx="7.7" cy="3.4" r="0.75" fill="#f0f0f0"/></svg>
<div class="b" style="left:611px;top:245px;width:223px;height:38px;background:#535353;"></div>
<div class="b" style="left:611px;top:283px;width:223px;height:1px;background:#464646;"></div>
<div class="b" style="left:641px;top:245px;width:1px;height:38px;background:#464646;"></div>
<svg class="b" style="left:619.8px;top:260.1px" width="13.5" height="8.6" viewBox="0 0 13.5 8.6"><path d="M0.1,4.3 C2.2,1.4 4.4,0.1 6.75,0.1 C9.1,0.1 11.3,1.4 13.4,4.3 C11.3,7.2 9.1,8.5 6.75,8.5 C4.4,8.5 2.2,7.2 0.1,4.3Z" fill="#dedede"/><circle cx="6.85" cy="4.3" r="2.55" fill="#3d3d3d"/><circle cx="7.7" cy="3.4" r="0.75" fill="#f0f0f0"/></svg>
<div class="b" style="left:611px;top:284px;width:223px;height:38px;background:#535353;"></div>
<div class="b" style="left:611px;top:322px;width:223px;height:1px;background:#464646;"></div>
<div class="b" style="left:641px;top:284px;width:1px;height:38px;background:#464646;"></div>
<svg class="b" style="left:619.8px;top:299.1px" width="13.5" height="8.6" viewBox="0 0 13.5 8.6"><path d="M0.1,4.3 C2.2,1.4 4.4,0.1 6.75,0.1 C9.1,0.1 11.3,1.4 13.4,4.3 C11.3,7.2 9.1,8.5 6.75,8.5 C4.4,8.5 2.2,7.2 0.1,4.3Z" fill="#dedede"/><circle cx="6.85" cy="4.3" r="2.55" fill="#3d3d3d"/><circle cx="7.7" cy="3.4" r="0.75" fill="#f0f0f0"/></svg>
<div class="b" style="left:611px;top:323px;width:223px;height:38px;background:#535353;"></div>
<div class="b" style="left:611px;top:361px;width:223px;height:1px;background:#464646;"></div>
<div class="b" style="left:641px;top:323px;width:1px;height:38px;background:#464646;"></div>
<svg class="b" style="left:619.8px;top:338.1px" width="13.5" height="8.6" viewBox="0 0 13.5 8.6"><path d="M0.1,4.3 C2.2,1.4 4.4,0.1 6.75,0.1 C9.1,0.1 11.3,1.4 13.4,4.3 C11.3,7.2 9.1,8.5 6.75,8.5 C4.4,8.5 2.2,7.2 0.1,4.3Z" fill="#dedede"/><circle cx="6.85" cy="4.3" r="2.55" fill="#3d3d3d"/><circle cx="7.7" cy="3.4" r="0.75" fill="#f0f0f0"/></svg>
<div class="b" style="left:645px;top:131px;width:32px;height:32px;background:#2a2a2a;"></div><svg class="b" style="left:646px;top:132px" width="30" height="30" viewBox="0 0 32 32"><defs><pattern id="ck1" width="8" height="8" patternUnits="userSpaceOnUse"><rect width="8" height="8" fill="#fff"/><rect width="4" height="4" fill="#ccc"/><rect x="4" y="4" width="4" height="4" fill="#ccc"/></pattern></defs><rect width="32" height="32" fill="url(#ck1)"/><g transform="translate(0.94 0.27) scale(0.0533)"><path d="M211.9,488 C240,503 280,518 311,522 C345,523 380,514 398.1,500 C401,512 404,528 404.8,531 C406.5,545 407.5,560 408.2,592 L321,592 C320.5,580 319.5,570 317.6,564.4 C315.5,556 312,549 305.9,547 C300,548 295,554 292.4,561 C290.5,570 289.5,580 289.1,592 L200.2,592 C200.5,575 201.5,560 201.9,557.7 C203,545 204.5,532 205.2,524.2 C207,512 209.5,498 211.9,488Z" fill="#47463f"/><rect x="199" y="585" width="208" height="80" fill="#47463f"/><path d="M284.0,190.0 C294.7,189.7 335.7,189.5 345.0,192.0 C354.3,194.5 341.1,201.7 340.0,205.0 C338.9,208.3 337.5,209.2 338.5,212.0 C339.5,214.8 342.8,218.8 346.0,222.0 C349.2,225.2 352.4,228.2 357.5,231.3 C362.6,234.4 370.2,237.9 376.5,240.8 C382.8,243.7 390.9,246.3 395.5,248.8 C400.1,251.3 402.0,253.1 404.0,256.0 C406.0,258.9 406.8,261.7 407.5,266.0 C408.2,270.3 408.6,276.7 408.5,282.0 C408.4,287.3 412.6,296.7 406.7,298.0 C400.8,299.3 389.1,292.0 373.0,290.0 C356.9,288.0 333.3,287.3 310.0,286.0 C286.7,284.7 252.7,282.0 233.0,282.0 C213.3,282.0 199.3,288.7 192.0,286.0 C184.7,283.3 189.6,272.5 189.0,266.0 C188.4,259.5 188.2,251.8 188.4,247.0 C188.7,242.2 189.6,239.9 190.5,237.0 C191.4,234.1 192.4,232.0 193.8,229.7 C195.2,227.4 197.1,224.8 199.0,223.0 C200.9,221.2 200.8,220.1 205.0,218.6 C209.2,217.1 216.6,215.4 224.0,213.8 C231.4,212.2 242.6,210.6 249.4,209.0 C256.2,207.4 260.8,205.6 265.0,204.0 C269.2,202.4 272.1,201.2 274.8,199.5 C277.5,197.8 279.5,195.6 281.0,194.0 C282.5,192.4 273.3,190.3 284.0,190.0Z" fill="#e0ad85"/><path d="M190.8,282.0 C193.4,277.9 193.9,280.0 201.0,279.5 C208.1,279.0 222.8,279.0 233.5,279.0 C244.2,279.0 252.6,279.1 265.3,279.6 C278.0,280.1 296.6,281.4 309.8,282.1 C323.0,282.8 334.1,282.9 344.7,283.7 C355.3,284.5 363.0,284.8 373.3,286.9 C383.6,289.0 400.2,293.0 406.7,296.4 C413.2,299.8 410.7,303.4 412.5,307.0 C414.3,310.6 415.4,313.2 417.7,317.8 C420.0,322.4 424.4,330.4 426.2,334.8 C428.0,339.2 428.0,341.1 428.3,344.0 C428.6,346.9 428.4,349.0 427.9,352.0 C427.4,355.0 426.6,358.6 425.5,362.0 C424.4,365.4 422.9,369.7 421.1,372.4 C419.3,375.1 416.8,376.3 414.5,378.0 C412.2,379.7 409.8,380.7 407.5,382.6 C405.2,384.5 403.6,386.7 400.7,389.4 C397.8,392.1 391.9,396.2 390.0,399.0 C388.1,401.8 388.2,403.0 389.0,406.0 C389.8,409.0 392.6,411.1 394.8,416.8 C397.0,422.5 400.9,430.5 402.0,440.0 C403.1,449.5 402.3,463.9 401.7,474.0 C401.1,484.1 400.4,494.0 398.1,500.7 C395.8,507.4 392.5,510.4 388.0,514.0 C383.5,517.6 378.6,520.2 371.3,522.5 C364.0,524.8 354.5,526.4 344.4,527.5 C334.3,528.6 321.5,529.8 310.9,529.2 C300.3,528.7 290.2,526.7 280.7,524.2 C271.2,521.7 262.3,517.9 253.9,514.0 C245.5,510.1 237.1,504.6 230.4,500.7 C223.7,496.8 217.9,493.8 213.6,490.6 C209.3,487.4 206.2,485.9 204.5,481.5 C202.8,477.1 204.8,471.4 203.5,464.0 C202.2,456.6 198.5,446.0 196.8,437.0 C195.1,428.0 195.1,415.7 193.5,410.0 C191.9,404.3 189.3,407.6 187.4,403.0 C185.5,398.4 183.6,389.9 182.3,382.6 C181.0,375.4 181.5,364.3 179.5,359.5 C177.5,354.7 172.8,355.7 170.4,353.6 C168.0,351.5 165.0,349.4 165.2,346.8 C165.4,344.2 169.2,341.1 171.5,338.0 C173.8,334.9 176.5,333.7 178.9,328.0 C181.3,322.3 183.7,311.7 185.7,304.0 C187.7,296.3 188.2,286.1 190.8,282.0Z" fill="#b4bbcb"/><path d="M238.6,341.0 C237.3,338.6 243.9,338.5 247.0,337.5 C250.1,336.5 250.7,335.2 257.0,335.0 C263.3,334.8 275.8,335.0 285.0,336.0 C294.2,337.0 302.7,339.8 312.0,341.0 C321.3,342.2 336.2,335.7 341.0,343.5 C345.8,351.3 337.8,379.6 341.0,388.0 C344.2,396.4 354.5,392.4 360.0,394.0 C365.5,395.6 370.5,396.4 374.0,397.5 C377.5,398.6 380.7,399.4 381.0,400.5 C381.3,401.6 379.5,403.9 376.0,404.0 C372.5,404.1 369.5,401.3 360.0,401.0 C350.5,400.7 335.3,401.4 319.0,402.0 C302.7,402.6 270.5,407.2 262.0,404.5 C253.5,401.8 265.7,392.2 268.0,386.0 C270.3,379.8 278.2,373.2 276.0,367.5 C273.8,361.8 261.2,356.4 255.0,352.0 C248.8,347.6 239.9,343.4 238.6,341.0Z" fill="#e3b48d"/><path d="M309.0,28.0 C315.7,27.6 321.7,27.8 329.0,28.5 C336.3,29.2 345.7,30.2 353.0,32.5 C360.3,34.8 367.2,38.8 373.0,42.0 C378.8,45.2 383.0,47.8 388.0,52.0 C393.0,56.2 398.9,61.7 403.0,67.0 C407.1,72.3 410.2,78.2 412.5,84.0 C414.8,89.8 416.3,95.7 417.0,101.5 C417.7,107.3 417.2,113.2 416.5,119.0 C415.8,124.8 414.4,130.2 412.5,136.0 C410.6,141.8 407.8,148.5 405.0,153.5 C402.2,158.5 399.3,162.4 396.0,166.0 C392.7,169.6 388.8,172.9 385.0,175.0 C381.2,177.1 376.8,178.3 373.0,178.5 C369.2,178.7 365.0,177.8 362.0,176.0 C359.0,174.2 357.0,168.7 355.0,168.0 C353.0,167.3 361.5,172.3 350.0,172.0 C338.5,171.7 297.7,167.0 286.0,166.0 C274.3,165.0 283.0,166.0 280.0,166.0 C277.0,166.0 271.8,166.5 268.0,166.0 C264.2,165.5 260.5,164.7 257.0,163.0 C253.5,161.3 250.7,159.2 247.0,156.0 C243.3,152.8 238.2,147.7 235.0,143.5 C231.8,139.3 229.6,135.6 227.5,131.0 C225.4,126.4 223.2,120.9 222.5,116.0 C221.8,111.1 222.2,107.2 223.5,101.5 C224.8,95.8 227.5,88.2 230.0,82.0 C232.5,75.8 234.8,69.7 238.5,64.5 C242.2,59.3 246.9,55.1 252.0,51.0 C257.1,46.9 262.8,43.3 269.0,40.0 C275.2,36.7 282.3,33.0 289.0,31.0 C295.7,29.0 302.3,28.4 309.0,28.0Z" fill="#2b221f"/><path d="M278.5,141.0 C279.1,136.6 279.4,137.1 281.6,134.5 C283.8,131.9 287.4,127.8 291.8,125.3 C296.2,122.8 302.6,120.2 308.0,119.2 C313.4,118.2 319.0,118.0 324.5,119.2 C330.0,120.4 336.2,123.5 341.0,126.4 C345.8,129.3 350.2,132.5 353.0,136.6 C355.8,140.7 357.3,145.8 357.8,150.9 C358.3,156.0 357.5,161.8 356.2,167.2 C354.9,172.6 352.5,178.1 350.0,183.6 C347.5,189.1 344.6,195.4 341.0,200.0 C337.4,204.6 332.7,208.8 328.6,211.2 C324.5,213.6 320.4,214.3 316.3,214.3 C312.2,214.3 308.1,213.2 304.0,211.2 C299.9,209.1 295.2,205.6 291.8,202.0 C288.4,198.4 285.7,194.1 283.6,189.7 C281.6,185.3 280.4,180.2 279.5,175.4 C278.6,170.6 278.2,166.7 278.0,161.0 C277.8,155.3 277.9,145.4 278.5,141.0Z" fill="#d9a57b"/></g></svg><div class="b" style="left:643px;top:129px;width:11px;height:1px;background:#f4f4f4;"></div><div class="b" style="left:643px;top:129px;width:1px;height:11px;background:#f4f4f4;"></div><div class="b" style="left:668px;top:129px;width:11px;height:1px;background:#f4f4f4;"></div><div class="b" style="left:678px;top:129px;width:1px;height:11px;background:#f4f4f4;"></div><div class="b" style="left:643px;top:164px;width:11px;height:1px;background:#f4f4f4;"></div><div class="b" style="left:643px;top:154px;width:1px;height:11px;background:#f4f4f4;"></div><div class="b" style="left:668px;top:164px;width:11px;height:1px;background:#f4f4f4;"></div><div class="b" style="left:678px;top:154px;width:1px;height:11px;background:#f4f4f4;"></div>
<div class="t" style="left:687.00px;top:140.86px;font-size:10.5px;line-height:15px;font-weight:normal;font-style:normal;color:#ebebeb;transform:scaleX(0.9170);">Subject_Levels</div>
<div class="b" style="left:645px;top:170px;width:32px;height:32px;background:#2a2a2a;"></div><svg class="b" style="left:646px;top:171px" width="30" height="30" viewBox="0 0 32 32"><defs><pattern id="ck2" width="8" height="8" patternUnits="userSpaceOnUse"><rect width="8" height="8" fill="#fff"/><rect width="4" height="4" fill="#ccc"/><rect x="4" y="4" width="4" height="4" fill="#ccc"/></pattern></defs><rect width="32" height="32" fill="url(#ck2)"/><g transform="translate(0.94 0.27) scale(0.0533)"><path d="M211.9,488 C240,503 280,518 311,522 C345,523 380,514 398.1,500 C401,512 404,528 404.8,531 C406.5,545 407.5,560 408.2,592 L321,592 C320.5,580 319.5,570 317.6,564.4 C315.5,556 312,549 305.9,547 C300,548 295,554 292.4,561 C290.5,570 289.5,580 289.1,592 L200.2,592 C200.5,575 201.5,560 201.9,557.7 C203,545 204.5,532 205.2,524.2 C207,512 209.5,498 211.9,488Z" fill="#47463f"/><rect x="199" y="585" width="208" height="80" fill="#47463f"/><path d="M284.0,190.0 C294.7,189.7 335.7,189.5 345.0,192.0 C354.3,194.5 341.1,201.7 340.0,205.0 C338.9,208.3 337.5,209.2 338.5,212.0 C339.5,214.8 342.8,218.8 346.0,222.0 C349.2,225.2 352.4,228.2 357.5,231.3 C362.6,234.4 370.2,237.9 376.5,240.8 C382.8,243.7 390.9,246.3 395.5,248.8 C400.1,251.3 402.0,253.1 404.0,256.0 C406.0,258.9 406.8,261.7 407.5,266.0 C408.2,270.3 408.6,276.7 408.5,282.0 C408.4,287.3 412.6,296.7 406.7,298.0 C400.8,299.3 389.1,292.0 373.0,290.0 C356.9,288.0 333.3,287.3 310.0,286.0 C286.7,284.7 252.7,282.0 233.0,282.0 C213.3,282.0 199.3,288.7 192.0,286.0 C184.7,283.3 189.6,272.5 189.0,266.0 C188.4,259.5 188.2,251.8 188.4,247.0 C188.7,242.2 189.6,239.9 190.5,237.0 C191.4,234.1 192.4,232.0 193.8,229.7 C195.2,227.4 197.1,224.8 199.0,223.0 C200.9,221.2 200.8,220.1 205.0,218.6 C209.2,217.1 216.6,215.4 224.0,213.8 C231.4,212.2 242.6,210.6 249.4,209.0 C256.2,207.4 260.8,205.6 265.0,204.0 C269.2,202.4 272.1,201.2 274.8,199.5 C277.5,197.8 279.5,195.6 281.0,194.0 C282.5,192.4 273.3,190.3 284.0,190.0Z" fill="#e0ad85"/><path d="M190.8,282.0 C193.4,277.9 193.9,280.0 201.0,279.5 C208.1,279.0 222.8,279.0 233.5,279.0 C244.2,279.0 252.6,279.1 265.3,279.6 C278.0,280.1 296.6,281.4 309.8,282.1 C323.0,282.8 334.1,282.9 344.7,283.7 C355.3,284.5 363.0,284.8 373.3,286.9 C383.6,289.0 400.2,293.0 406.7,296.4 C413.2,299.8 410.7,303.4 412.5,307.0 C414.3,310.6 415.4,313.2 417.7,317.8 C420.0,322.4 424.4,330.4 426.2,334.8 C428.0,339.2 428.0,341.1 428.3,344.0 C428.6,346.9 428.4,349.0 427.9,352.0 C427.4,355.0 426.6,358.6 425.5,362.0 C424.4,365.4 422.9,369.7 421.1,372.4 C419.3,375.1 416.8,376.3 414.5,378.0 C412.2,379.7 409.8,380.7 407.5,382.6 C405.2,384.5 403.6,386.7 400.7,389.4 C397.8,392.1 391.9,396.2 390.0,399.0 C388.1,401.8 388.2,403.0 389.0,406.0 C389.8,409.0 392.6,411.1 394.8,416.8 C397.0,422.5 400.9,430.5 402.0,440.0 C403.1,449.5 402.3,463.9 401.7,474.0 C401.1,484.1 400.4,494.0 398.1,500.7 C395.8,507.4 392.5,510.4 388.0,514.0 C383.5,517.6 378.6,520.2 371.3,522.5 C364.0,524.8 354.5,526.4 344.4,527.5 C334.3,528.6 321.5,529.8 310.9,529.2 C300.3,528.7 290.2,526.7 280.7,524.2 C271.2,521.7 262.3,517.9 253.9,514.0 C245.5,510.1 237.1,504.6 230.4,500.7 C223.7,496.8 217.9,493.8 213.6,490.6 C209.3,487.4 206.2,485.9 204.5,481.5 C202.8,477.1 204.8,471.4 203.5,464.0 C202.2,456.6 198.5,446.0 196.8,437.0 C195.1,428.0 195.1,415.7 193.5,410.0 C191.9,404.3 189.3,407.6 187.4,403.0 C185.5,398.4 183.6,389.9 182.3,382.6 C181.0,375.4 181.5,364.3 179.5,359.5 C177.5,354.7 172.8,355.7 170.4,353.6 C168.0,351.5 165.0,349.4 165.2,346.8 C165.4,344.2 169.2,341.1 171.5,338.0 C173.8,334.9 176.5,333.7 178.9,328.0 C181.3,322.3 183.7,311.7 185.7,304.0 C187.7,296.3 188.2,286.1 190.8,282.0Z" fill="#b4bbcb"/><path d="M238.6,341.0 C237.3,338.6 243.9,338.5 247.0,337.5 C250.1,336.5 250.7,335.2 257.0,335.0 C263.3,334.8 275.8,335.0 285.0,336.0 C294.2,337.0 302.7,339.8 312.0,341.0 C321.3,342.2 336.2,335.7 341.0,343.5 C345.8,351.3 337.8,379.6 341.0,388.0 C344.2,396.4 354.5,392.4 360.0,394.0 C365.5,395.6 370.5,396.4 374.0,397.5 C377.5,398.6 380.7,399.4 381.0,400.5 C381.3,401.6 379.5,403.9 376.0,404.0 C372.5,404.1 369.5,401.3 360.0,401.0 C350.5,400.7 335.3,401.4 319.0,402.0 C302.7,402.6 270.5,407.2 262.0,404.5 C253.5,401.8 265.7,392.2 268.0,386.0 C270.3,379.8 278.2,373.2 276.0,367.5 C273.8,361.8 261.2,356.4 255.0,352.0 C248.8,347.6 239.9,343.4 238.6,341.0Z" fill="#e3b48d"/><path d="M309.0,28.0 C315.7,27.6 321.7,27.8 329.0,28.5 C336.3,29.2 345.7,30.2 353.0,32.5 C360.3,34.8 367.2,38.8 373.0,42.0 C378.8,45.2 383.0,47.8 388.0,52.0 C393.0,56.2 398.9,61.7 403.0,67.0 C407.1,72.3 410.2,78.2 412.5,84.0 C414.8,89.8 416.3,95.7 417.0,101.5 C417.7,107.3 417.2,113.2 416.5,119.0 C415.8,124.8 414.4,130.2 412.5,136.0 C410.6,141.8 407.8,148.5 405.0,153.5 C402.2,158.5 399.3,162.4 396.0,166.0 C392.7,169.6 388.8,172.9 385.0,175.0 C381.2,177.1 376.8,178.3 373.0,178.5 C369.2,178.7 365.0,177.8 362.0,176.0 C359.0,174.2 357.0,168.7 355.0,168.0 C353.0,167.3 361.5,172.3 350.0,172.0 C338.5,171.7 297.7,167.0 286.0,166.0 C274.3,165.0 283.0,166.0 280.0,166.0 C277.0,166.0 271.8,166.5 268.0,166.0 C264.2,165.5 260.5,164.7 257.0,163.0 C253.5,161.3 250.7,159.2 247.0,156.0 C243.3,152.8 238.2,147.7 235.0,143.5 C231.8,139.3 229.6,135.6 227.5,131.0 C225.4,126.4 223.2,120.9 222.5,116.0 C221.8,111.1 222.2,107.2 223.5,101.5 C224.8,95.8 227.5,88.2 230.0,82.0 C232.5,75.8 234.8,69.7 238.5,64.5 C242.2,59.3 246.9,55.1 252.0,51.0 C257.1,46.9 262.8,43.3 269.0,40.0 C275.2,36.7 282.3,33.0 289.0,31.0 C295.7,29.0 302.3,28.4 309.0,28.0Z" fill="#2b221f"/><path d="M278.5,141.0 C279.1,136.6 279.4,137.1 281.6,134.5 C283.8,131.9 287.4,127.8 291.8,125.3 C296.2,122.8 302.6,120.2 308.0,119.2 C313.4,118.2 319.0,118.0 324.5,119.2 C330.0,120.4 336.2,123.5 341.0,126.4 C345.8,129.3 350.2,132.5 353.0,136.6 C355.8,140.7 357.3,145.8 357.8,150.9 C358.3,156.0 357.5,161.8 356.2,167.2 C354.9,172.6 352.5,178.1 350.0,183.6 C347.5,189.1 344.6,195.4 341.0,200.0 C337.4,204.6 332.7,208.8 328.6,211.2 C324.5,213.6 320.4,214.3 316.3,214.3 C312.2,214.3 308.1,213.2 304.0,211.2 C299.9,209.1 295.2,205.6 291.8,202.0 C288.4,198.4 285.7,194.1 283.6,189.7 C281.6,185.3 280.4,180.2 279.5,175.4 C278.6,170.6 278.2,166.7 278.0,161.0 C277.8,155.3 277.9,145.4 278.5,141.0Z" fill="#d9a57b"/></g></svg>
<div class="t" style="left:687.00px;top:179.86px;font-size:10.5px;line-height:15px;font-weight:normal;font-style:normal;color:#ebebeb;transform:scaleX(0.9851);">Subject</div>
<svg class="b" style="left:651.6px;top:222px" width="7" height="7.4" viewBox="0 0 7 7.4"><path d="M6.6,0.6 L3.4,0.6 L3.4,5" fill="none" stroke="#d4d4d4" stroke-width="1.2"/><path d="M0.6,4 L3.4,7.2 L6.2,4Z" fill="#d4d4d4"/></svg>
<svg class="b" style="left:669px;top:217.5px" width="16.4" height="13.4" viewBox="0 0 16.4 13.4"><defs><linearGradient id="ag" x1="0" y1="0" x2="1" y2="0"><stop offset="0" stop-color="#3c3c3c"/><stop offset="1" stop-color="#e4e4e4"/></linearGradient></defs><rect x="0.5" y="0.5" width="15.4" height="12.4" fill="#d2d2d2" stroke="#d4d4d4"/><rect x="1" y="6.6" width="14.4" height="5.8" fill="url(#ag)"/><rect x="1.4" y="1.4" width="2.6" height="4.4" fill="#6a6a6a"/><rect x="5" y="1.4" width="2.6" height="4.4" fill="#777"/><rect x="8.6" y="1.4" width="2.6" height="4.4" fill="#6a6a6a"/><rect x="12.2" y="1.4" width="2.8" height="4.4" fill="#777"/></svg>
<svg class="b" style="left:696.2px;top:217.7px" width="8" height="14" viewBox="0 0 8 14"><rect x="0.85" y="0.85" width="6.3" height="6" rx="2.9" fill="none" stroke="#d4d4d4" stroke-width="1.7"/><rect x="0.85" y="7.15" width="6.3" height="6" rx="2.9" fill="none" stroke="#d4d4d4" stroke-width="1.7"/><rect x="2.6" y="3.4" width="2.8" height="7.2" rx="1.2" fill="#535353"/><rect x="3.1" y="3.9" width="1.8" height="6.2" rx="0.9" fill="#d4d4d4"/></svg>
<div class="b" style="left:708px;top:209px;width:32px;height:32px;background:#2a2a2a;"></div>
<div class="b" style="left:709px;top:210px;width:30px;height:30px;background:#ffffff;"></div>
<div class="t" style="left:749.60px;top:218.86px;font-size:10.5px;line-height:15px;font-weight:normal;font-style:normal;color:#ebebeb;transform:scaleX(0.9589);">BI_Saturation...</div>
<div class="b" style="left:645px;top:248px;width:32px;height:32px;background:#2a2a2a;"></div><svg class="b" style="left:646px;top:249px" width="30" height="30" viewBox="0 0 32 32"><defs><pattern id="ck4" width="8" height="8" patternUnits="userSpaceOnUse"><rect width="8" height="8" fill="#fff"/><rect width="4" height="4" fill="#ccc"/><rect x="4" y="4" width="4" height="4" fill="#ccc"/></pattern></defs><rect width="32" height="32" fill="url(#ck4)"/><defs><clipPath id="tq"><polygon points="1.2,2.2 31.7,0.1 29.5,27.3 4.5,25.2"/></clipPath></defs><g clip-path="url(#tq)"><rect width="32" height="32" fill="#dcdbd5"/><polygon points="0,0 32,0 32,9.6 0,11" fill="#7fb3e6"/><rect x="5.4" y="5.4" width="5" height="2" fill="#cfe0f2"/><polygon points="0,10.6 32,9.4 32,11.6 0,12.8" fill="#bdb9a8"/><rect x="10.6" y="12" width="1.6" height="9" fill="#b4b1a2"/><rect x="19.8" y="12" width="2" height="9" fill="#b4b1a2"/><polygon points="4,20 30,21.4 30,23.8 4,22.2" fill="#b9965f"/><polygon points="4,22 30,23.6 30,28 4,26" fill="#7fc0d8"/></g></svg>
<div class="t" style="left:687.00px;top:257.86px;font-size:10.5px;line-height:15px;font-weight:normal;font-style:normal;color:#ebebeb;transform:scaleX(0.9610);">Background Image</div>
<div class="b" style="left:685px;top:270.4px;width:91px;height:1px;background:#d8d8d8;"></div>
<div class="b" style="left:645px;top:287px;width:32px;height:32px;background:#2a2a2a;"></div>
<div class="b" style="left:646px;top:288px;width:29px;height:21px;background:#000;"></div>
<div class="b" style="left:675px;top:288px;width:1px;height:22px;background:#d6d6d6;"></div>
<div class="b" style="left:646px;top:309px;width:30px;height:1px;background:#d6d6d6;"></div>
<div class="b" style="left:646px;top:311px;width:30px;height:7px;background:#c2c2c2;"></div>
<div class="b" style="left:648px;top:313px;width:26px;height:1px;background:#3a3a3a;"></div>
<svg class="b" style="left:658.4px;top:314px" width="5.8" height="3" viewBox="0 0 5.8 3"><path d="M0,3 L2.9,0 L5.8,3Z" fill="#1a1a1a"/></svg>
<svg class="b" style="left:680px;top:295.8px" width="8" height="14" viewBox="0 0 8 14"><rect x="0.85" y="0.85" width="6.3" height="6" rx="2.9" fill="none" stroke="#d4d4d4" stroke-width="1.7"/><rect x="0.85" y="7.15" width="6.3" height="6" rx="2.9" fill="none" stroke="#d4d4d4" stroke-width="1.7"/><rect x="2.6" y="3.4" width="2.8" height="7.2" rx="1.2" fill="#535353"/><rect x="3.1" y="3.9" width="1.8" height="6.2" rx="0.9" fill="#d4d4d4"/></svg>
<div class="b" style="left:692px;top:287px;width:32px;height:32px;background:#2a2a2a;"></div>
<div class="b" style="left:693px;top:288px;width:30px;height:30px;background:#ffffff;"></div>
<div class="t" style="left:734.30px;top:296.86px;font-size:10.5px;line-height:15px;font-weight:normal;font-style:normal;color:#ebebeb;transform:scaleX(0.9316);">Background Color</div>
<div class="b" style="left:645px;top:326px;width:32px;height:32px;background:#2a2a2a;"></div><svg class="b" style="left:646px;top:327px" width="30" height="30" viewBox="0 0 32 32"><defs><linearGradient id="bgg" x1="0" y1="0" x2="1" y2="1"><stop offset="0" stop-color="#a9afc4"/><stop offset="1" stop-color="#b9bccb"/></linearGradient></defs><rect width="32" height="32" fill="url(#bgg)"/><g transform="translate(0.94 0.27) scale(0.0533)"><path d="M211.9,488 C240,503 280,518 311,522 C345,523 380,514 398.1,500 C401,512 404,528 404.8,531 C406.5,545 407.5,560 408.2,592 L321,592 C320.5,580 319.5,570 317.6,564.4 C315.5,556 312,549 305.9,547 C300,548 295,554 292.4,561 C290.5,570 289.5,580 289.1,592 L200.2,592 C200.5,575 201.5,560 201.9,557.7 C203,545 204.5,532 205.2,524.2 C207,512 209.5,498 211.9,488Z" fill="#47463f"/><rect x="199" y="585" width="208" height="80" fill="#47463f"/><path d="M284.0,190.0 C294.7,189.7 335.7,189.5 345.0,192.0 C354.3,194.5 341.1,201.7 340.0,205.0 C338.9,208.3 337.5,209.2 338.5,212.0 C339.5,214.8 342.8,218.8 346.0,222.0 C349.2,225.2 352.4,228.2 357.5,231.3 C362.6,234.4 370.2,237.9 376.5,240.8 C382.8,243.7 390.9,246.3 395.5,248.8 C400.1,251.3 402.0,253.1 404.0,256.0 C406.0,258.9 406.8,261.7 407.5,266.0 C408.2,270.3 408.6,276.7 408.5,282.0 C408.4,287.3 412.6,296.7 406.7,298.0 C400.8,299.3 389.1,292.0 373.0,290.0 C356.9,288.0 333.3,287.3 310.0,286.0 C286.7,284.7 252.7,282.0 233.0,282.0 C213.3,282.0 199.3,288.7 192.0,286.0 C184.7,283.3 189.6,272.5 189.0,266.0 C188.4,259.5 188.2,251.8 188.4,247.0 C188.7,242.2 189.6,239.9 190.5,237.0 C191.4,234.1 192.4,232.0 193.8,229.7 C195.2,227.4 197.1,224.8 199.0,223.0 C200.9,221.2 200.8,220.1 205.0,218.6 C209.2,217.1 216.6,215.4 224.0,213.8 C231.4,212.2 242.6,210.6 249.4,209.0 C256.2,207.4 260.8,205.6 265.0,204.0 C269.2,202.4 272.1,201.2 274.8,199.5 C277.5,197.8 279.5,195.6 281.0,194.0 C282.5,192.4 273.3,190.3 284.0,190.0Z" fill="#e0ad85"/><path d="M190.8,282.0 C193.4,277.9 193.9,280.0 201.0,279.5 C208.1,279.0 222.8,279.0 233.5,279.0 C244.2,279.0 252.6,279.1 265.3,279.6 C278.0,280.1 296.6,281.4 309.8,282.1 C323.0,282.8 334.1,282.9 344.7,283.7 C355.3,284.5 363.0,284.8 373.3,286.9 C383.6,289.0 400.2,293.0 406.7,296.4 C413.2,299.8 410.7,303.4 412.5,307.0 C414.3,310.6 415.4,313.2 417.7,317.8 C420.0,322.4 424.4,330.4 426.2,334.8 C428.0,339.2 428.0,341.1 428.3,344.0 C428.6,346.9 428.4,349.0 427.9,352.0 C427.4,355.0 426.6,358.6 425.5,362.0 C424.4,365.4 422.9,369.7 421.1,372.4 C419.3,375.1 416.8,376.3 414.5,378.0 C412.2,379.7 409.8,380.7 407.5,382.6 C405.2,384.5 403.6,386.7 400.7,389.4 C397.8,392.1 391.9,396.2 390.0,399.0 C388.1,401.8 388.2,403.0 389.0,406.0 C389.8,409.0 392.6,411.1 394.8,416.8 C397.0,422.5 400.9,430.5 402.0,440.0 C403.1,449.5 402.3,463.9 401.7,474.0 C401.1,484.1 400.4,494.0 398.1,500.7 C395.8,507.4 392.5,510.4 388.0,514.0 C383.5,517.6 378.6,520.2 371.3,522.5 C364.0,524.8 354.5,526.4 344.4,527.5 C334.3,528.6 321.5,529.8 310.9,529.2 C300.3,528.7 290.2,526.7 280.7,524.2 C271.2,521.7 262.3,517.9 253.9,514.0 C245.5,510.1 237.1,504.6 230.4,500.7 C223.7,496.8 217.9,493.8 213.6,490.6 C209.3,487.4 206.2,485.9 204.5,481.5 C202.8,477.1 204.8,471.4 203.5,464.0 C202.2,456.6 198.5,446.0 196.8,437.0 C195.1,428.0 195.1,415.7 193.5,410.0 C191.9,404.3 189.3,407.6 187.4,403.0 C185.5,398.4 183.6,389.9 182.3,382.6 C181.0,375.4 181.5,364.3 179.5,359.5 C177.5,354.7 172.8,355.7 170.4,353.6 C168.0,351.5 165.0,349.4 165.2,346.8 C165.4,344.2 169.2,341.1 171.5,338.0 C173.8,334.9 176.5,333.7 178.9,328.0 C181.3,322.3 183.7,311.7 185.7,304.0 C187.7,296.3 188.2,286.1 190.8,282.0Z" fill="#b4bbcb"/><path d="M238.6,341.0 C237.3,338.6 243.9,338.5 247.0,337.5 C250.1,336.5 250.7,335.2 257.0,335.0 C263.3,334.8 275.8,335.0 285.0,336.0 C294.2,337.0 302.7,339.8 312.0,341.0 C321.3,342.2 336.2,335.7 341.0,343.5 C345.8,351.3 337.8,379.6 341.0,388.0 C344.2,396.4 354.5,392.4 360.0,394.0 C365.5,395.6 370.5,396.4 374.0,397.5 C377.5,398.6 380.7,399.4 381.0,400.5 C381.3,401.6 379.5,403.9 376.0,404.0 C372.5,404.1 369.5,401.3 360.0,401.0 C350.5,400.7 335.3,401.4 319.0,402.0 C302.7,402.6 270.5,407.2 262.0,404.5 C253.5,401.8 265.7,392.2 268.0,386.0 C270.3,379.8 278.2,373.2 276.0,367.5 C273.8,361.8 261.2,356.4 255.0,352.0 C248.8,347.6 239.9,343.4 238.6,341.0Z" fill="#e3b48d"/><path d="M309.0,28.0 C315.7,27.6 321.7,27.8 329.0,28.5 C336.3,29.2 345.7,30.2 353.0,32.5 C360.3,34.8 367.2,38.8 373.0,42.0 C378.8,45.2 383.0,47.8 388.0,52.0 C393.0,56.2 398.9,61.7 403.0,67.0 C407.1,72.3 410.2,78.2 412.5,84.0 C414.8,89.8 416.3,95.7 417.0,101.5 C417.7,107.3 417.2,113.2 416.5,119.0 C415.8,124.8 414.4,130.2 412.5,136.0 C410.6,141.8 407.8,148.5 405.0,153.5 C402.2,158.5 399.3,162.4 396.0,166.0 C392.7,169.6 388.8,172.9 385.0,175.0 C381.2,177.1 376.8,178.3 373.0,178.5 C369.2,178.7 365.0,177.8 362.0,176.0 C359.0,174.2 357.0,168.7 355.0,168.0 C353.0,167.3 361.5,172.3 350.0,172.0 C338.5,171.7 297.7,167.0 286.0,166.0 C274.3,165.0 283.0,166.0 280.0,166.0 C277.0,166.0 271.8,166.5 268.0,166.0 C264.2,165.5 260.5,164.7 257.0,163.0 C253.5,161.3 250.7,159.2 247.0,156.0 C243.3,152.8 238.2,147.7 235.0,143.5 C231.8,139.3 229.6,135.6 227.5,131.0 C225.4,126.4 223.2,120.9 222.5,116.0 C221.8,111.1 222.2,107.2 223.5,101.5 C224.8,95.8 227.5,88.2 230.0,82.0 C232.5,75.8 234.8,69.7 238.5,64.5 C242.2,59.3 246.9,55.1 252.0,51.0 C257.1,46.9 262.8,43.3 269.0,40.0 C275.2,36.7 282.3,33.0 289.0,31.0 C295.7,29.0 302.3,28.4 309.0,28.0Z" fill="#2b221f"/><path d="M278.5,141.0 C279.1,136.6 279.4,137.1 281.6,134.5 C283.8,131.9 287.4,127.8 291.8,125.3 C296.2,122.8 302.6,120.2 308.0,119.2 C313.4,118.2 319.0,118.0 324.5,119.2 C330.0,120.4 336.2,123.5 341.0,126.4 C345.8,129.3 350.2,132.5 353.0,136.6 C355.8,140.7 357.3,145.8 357.8,150.9 C358.3,156.0 357.5,161.8 356.2,167.2 C354.9,172.6 352.5,178.1 350.0,183.6 C347.5,189.1 344.6,195.4 341.0,200.0 C337.4,204.6 332.7,208.8 328.6,211.2 C324.5,213.6 320.4,214.3 316.3,214.3 C312.2,214.3 308.1,213.2 304.0,211.2 C299.9,209.1 295.2,205.6 291.8,202.0 C288.4,198.4 285.7,194.1 283.6,189.7 C281.6,185.3 280.4,180.2 279.5,175.4 C278.6,170.6 278.2,166.7 278.0,161.0 C277.8,155.3 277.9,145.4 278.5,141.0Z" fill="#d9a57b"/></g></svg>
<div class="t" style="left:688.00px;top:335.86px;font-size:10.5px;line-height:15px;font-weight:normal;font-style:italic;color:#ebebeb;transform:scaleX(0.9458);">Background</div>
<svg class="b" style="left:807px;top:336px" width="9.6" height="12.6" viewBox="0 0 9.6 12.6"><path d="M2.7,4.9 V3.1 A2.1,2.1 0 0 1 6.9,3.1 V4.9" fill="none" stroke="#d4d4d4" stroke-width="1.2"/><rect x="0.6" y="4.9" width="8.4" height="6.8" fill="#626262" stroke="#d4d4d4" stroke-width="1.2"/><rect x="4" y="7.4" width="1.6" height="1.8" fill="#f0f0f0"/></svg>
</body></html>
